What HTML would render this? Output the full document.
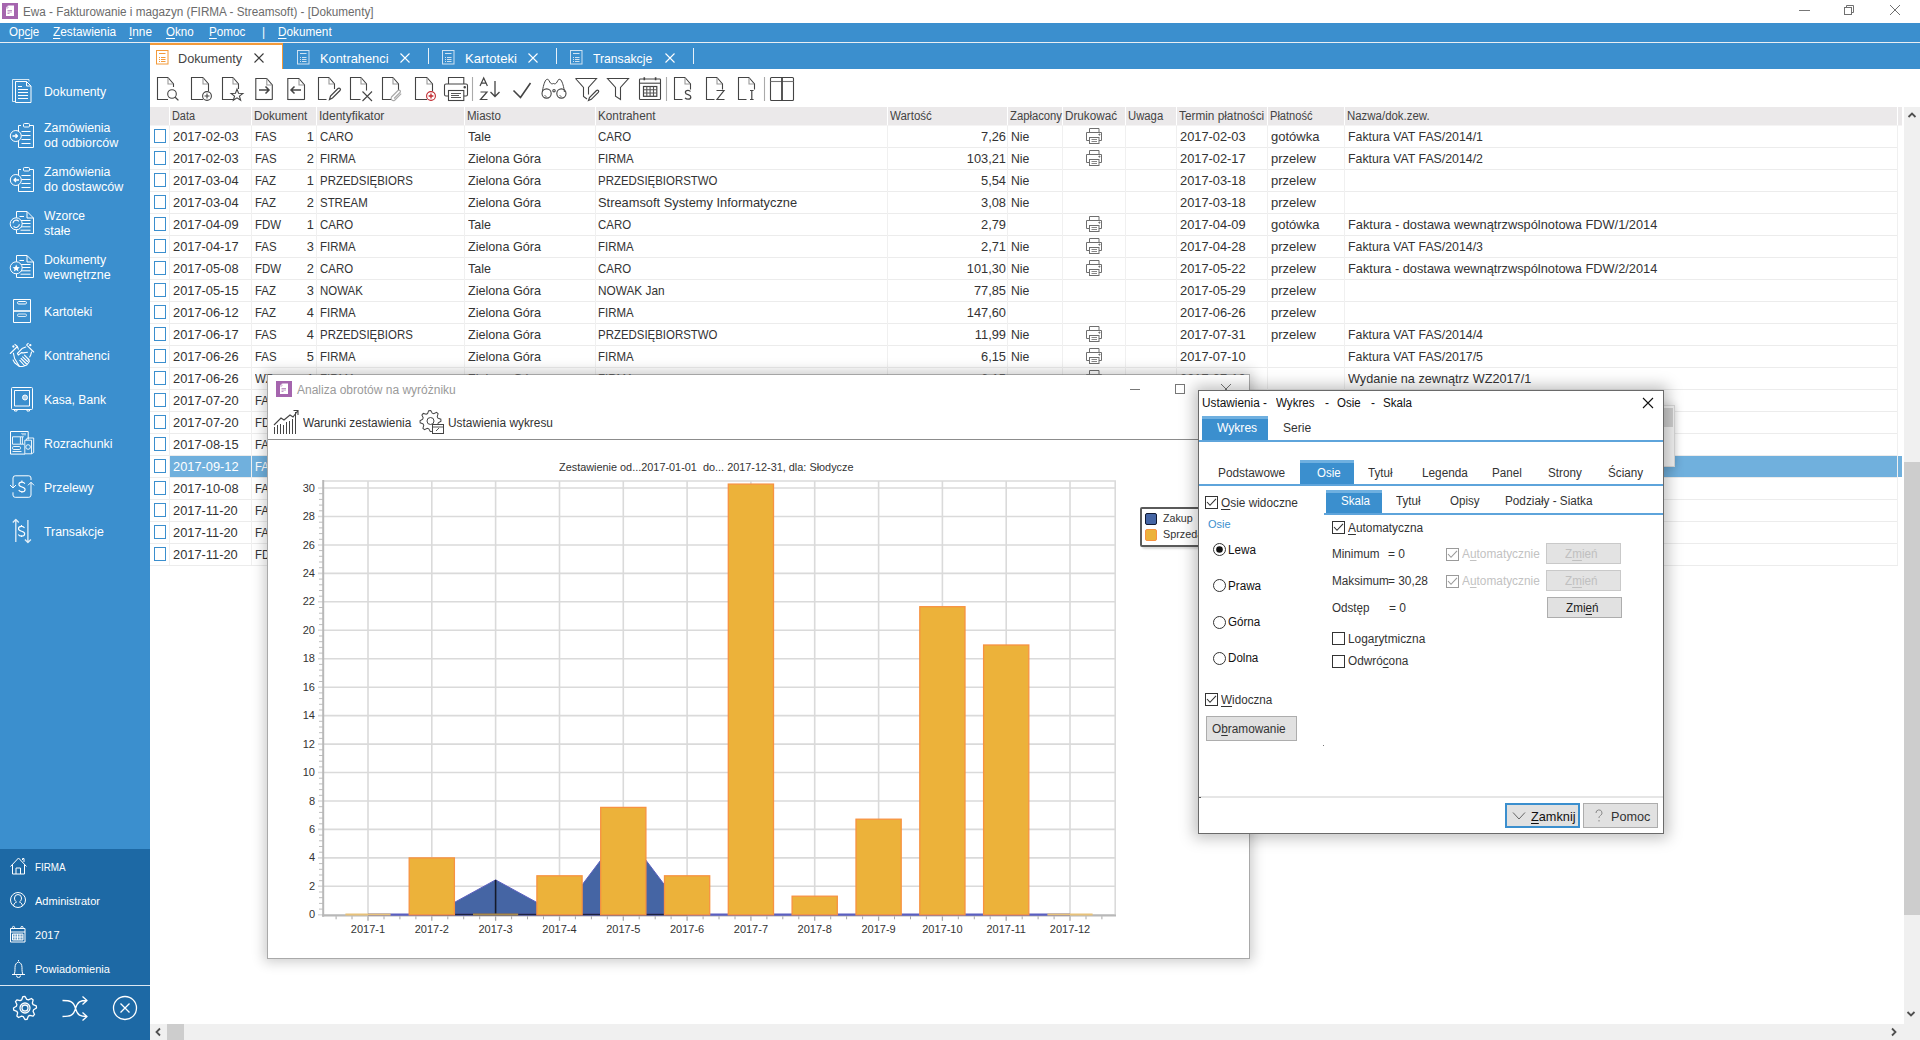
<!DOCTYPE html>
<html><head><meta charset="utf-8"><title>Ewa - Fakturowanie i magazyn</title>
<style>
*{margin:0;padding:0;box-sizing:border-box}
html,body{width:1920px;height:1040px;overflow:hidden;background:#fff;font-family:"Liberation Sans",sans-serif;color:#333;}
.a{position:absolute}
.t{position:absolute;white-space:nowrap;line-height:1}
u{text-decoration:underline;text-decoration-thickness:1px;text-underline-offset:2px}
</style></head><body>

<svg class="a" style="left:2px;top:3px" width="16" height="16" viewBox="0 0 16 16"><rect width="16" height="16" fill="#a565ae"/><path d="M6 2.5h6v10.5h-8v-8.5z" fill="#fff"/><path d="M4 4.5l2-2M4.5 5.3c1 .3 1.8-.5 1.5-1.5" fill="none" stroke="#b27ab9" stroke-width="0.7"/><path d="M5.5 7.5h4.5M5.5 9h4.5M5.5 10.5h2" stroke="#b98ac0" stroke-width="0.9"/></svg>
<div class="t" style="left:23px;top:6px;font-size:12px;color:#6b6b6b;transform:scaleX(0.977);transform-origin:0 0;">Ewa - Fakturowanie i magazyn (FIRMA - Streamsoft) - [Dokumenty]</div>
<div class="a" style="left:1799px;top:10px;width:11px;height:1px;background:#777"></div>
<svg class="a" style="left:1843px;top:4px" width="12" height="12" viewBox="0 0 12 12"><g fill="none" stroke="#707070" stroke-width="1"><rect x="1.5" y="3.5" width="7" height="7"/><path d="M3.5 3.5V1.5h7v7h-2"/></g></svg>
<svg class="a" style="left:1889px;top:4px" width="12" height="12" viewBox="0 0 12 12"><path d="M1 1L11 11M11 1L1 11" stroke="#707070" stroke-width="1"/></svg>
<div class="a" style="left:0px;top:23px;width:1920px;height:19px;background:#3b8fce"></div>
<div class="a" style="left:0px;top:42px;width:1920px;height:1px;background:#e9eef3"></div>
<div class="t" style="left:9px;top:26px;font-size:12px;color:#fff;transform:scaleX(0.964);transform-origin:0 0;">Op<u>c</u>je</div>
<div class="t" style="left:53px;top:26px;font-size:12px;color:#fff;transform:scaleX(0.986);transform-origin:0 0;"><u>Z</u>estawienia</div>
<div class="t" style="left:129px;top:26px;font-size:12px;color:#fff;transform:scaleX(0.983);transform-origin:0 0;"><u>I</u>nne</div>
<div class="t" style="left:166px;top:26px;font-size:12px;color:#fff;transform:scaleX(0.961);transform-origin:0 0;"><u>O</u>kno</div>
<div class="t" style="left:209px;top:26px;font-size:12px;color:#fff;transform:scaleX(0.974);transform-origin:0 0;"><u>P</u>omoc</div>
<div class="t" style="left:262px;top:26px;font-size:12px;color:#fff;">|</div>
<div class="t" style="left:278px;top:26px;font-size:12px;color:#fff;transform:scaleX(0.981);transform-origin:0 0;"><u>D</u>okument</div>
<div class="a" style="left:150px;top:43px;width:1770px;height:26px;background:#3b8fce"></div>
<div class="a" style="left:0px;top:43px;width:150px;height:806px;background:#3b8fce"></div>
<div class="a" style="left:0px;top:849px;width:150px;height:191px;background:#1d69a5"></div>
<div class="a" style="left:0px;top:985px;width:150px;height:1px;background:#dce8f2"></div>
<svg class="a" style="left:0;top:0" width="150" height="1040" viewBox="0 0 150 1040"><g fill="none" stroke="#fff" stroke-width="1" stroke-linejoin="round"><path d="M15 101.5h-2.5v-22h16.5v2" stroke-opacity="0.8"/><path d="M15.5 81.5h11l4.5 4.5v16.5h-15.5z"/><path d="M26.5 81.5v4.5h4.5"/><path d="M18 86.5h4M18 89.5h10M18 92.5h10M18 95.5h10M18 98.5h10" stroke-width="1.2"/><path d="M21 125.5h-2.5v22h15v-22h-3.5"/><rect x="23.5" y="123.5" width="6" height="3.5" rx="1"/><path d="M21.5 131.5h9"/><path d="M21.5 135.5h9"/><path d="M21.5 139.5h9"/><path d="M21.5 143.5h9"/><circle cx="15.8" cy="136" r="5.5" fill="#3b8fce"/><path d="M12.5 136h5M15.5 134l2 2l-2 2" stroke-width="1.3"/><path d="M21 169.5h-2.5v22h15v-22h-3.5"/><rect x="23.5" y="167.5" width="6" height="3.5" rx="1"/><path d="M21.5 175.5h9"/><path d="M21.5 179.5h9"/><path d="M21.5 183.5h9"/><path d="M21.5 187.5h9"/><circle cx="15.8" cy="180" r="5.5" fill="#3b8fce"/><path d="M19 180h-5M16 178l-2 2l2 2" stroke-width="1.3"/><path d="M16.5 233.5v-22h10.5l6.5 6.5v15.5z"/><path d="M27 211.5v6.5h6.5"/><path d="M19.5 216.5h4.5M20.5 220.5h10M20.5 223.5h10M20.5 226.8h10M20.5 230.2h10"/><circle cx="16.2" cy="223.8" r="6" fill="#3b8fce"/><path d="M13 223.3 a3.3 3.3 0 0 1 5.8 -2M19.4 224.3 a3.3 3.3 0 0 1 -5.8 2" stroke-width="1.1"/><path d="M16.5 277.5v-22h10.5l6.5 6.5v15.5z"/><path d="M27 255.5v6.5h6.5"/><path d="M19.5 260.5h4.5M20.5 264.5h10M20.5 267.5h10M20.5 270.8h10M20.5 274.2h10"/><circle cx="16.2" cy="267.8" r="6" fill="#3b8fce"/><path d="M16.2 264.6l1.1 2.3l2.5 .3l-1.9 1.7l.6 2.5l-2.3-1.3l-2.3 1.3l.6-2.5l-1.9-1.7l2.5-.3z" fill="#fff" stroke="none"/><rect x="13.5" y="299.5" width="17" height="23" /><path d="M13.5 310.5h17M13.5 311.5h17" stroke-opacity="0.8"/><rect x="17.5" y="301.5" width="9" height="2.5" rx="1.2"/><rect x="17.5" y="314" width="9" height="2.5" rx="1.2" stroke-opacity="0.8"/><g stroke-width="1.1" stroke-linecap="round"><path d="M10.3 353.5l7.1-7M14.9 344.3l2.5 2.2l.9 2.7M27.5 345.8l6.2 6.2M28.2 343.4c-1 .5-1.5 1-1.6 1.8"/><circle cx="13.4" cy="346.5" r="0.6" fill="#fff"/><circle cx="30.3" cy="345.2" r="0.6" fill="#fff"/><path d="M25.7 347.1l-3.7 1.5l-4.6 4.9l.9 1.6l3.1-2.5l1.8.3l4.3-.6"/><path d="M13.4 353.2l1.2 5.3l4.9 8h3.1l4.2-1.5l2.5-3.5l-1-2.5"/><path d="M31.5 352l-.8 3l-1 1.9"/><path d="M24.5 355.1l4.6 4.9M22.6 356.9l4.9 4.6M21.1 358.5l5.5 5.5M19.8 360.3l4.7 5.2"/><path d="M13.1 360l1.5 2.8l4.9 3.7"/></g><rect x="11.5" y="387.5" width="21" height="22" rx="1"/><rect x="14.5" y="390.5" width="15" height="15.5"/><circle cx="25" cy="397.5" r="2.5" fill="#fff" fill-opacity="0.6"/><path d="M14.5 409.5v1.5h2.5v-1.5M27 409.5v1.5h2.5v-1.5"/><path d="M25 454.1h-14.5v-22.6h17.7v8"/><path d="M21 433.7h5M22 434.8h4" stroke-opacity="0.6"/><path d="M12.5 444.2v-7.4h11.3M12.5 444.2h11.5M20.4 437v7M22.4 437v7" stroke-width="0.9"/><rect x="12.5" y="446.5" width="8" height="3" rx="1.2" stroke-width="0.9"/><path d="M12.5 451.5h9" stroke-width="0.9"/><path d="M24.8 453.8v-13.6h6.7v13.6h-6.7M26 440.2l1.3-2.2h6.4v14.5l-2.2 1.3" stroke-width="0.9"/><circle cx="28.1" cy="447" r="2.3" stroke-width="0.9"/><path d="M13 488v-10a2.2 2.2 0 0 1 2.2-2.2h13.6a2.2 2.2 0 0 1 2.2 2.2v2"/><path d="M31 482.3v12.8a2.2 2.2 0 0 1 -2.2 2.2h-13.6a2.2 2.2 0 0 1 -2.2-2.2v-2.8"/><path d="M10 485l3 3l3-3M28 485.3l3-3l3 3"/><path d="M24.9 483.7c-.6-1-1.7-1.6-3-1.6c-1.8 0-3 1-3 2.3c0 3 6.2 2 6.2 5c0 1.4-1.3 2.4-3.2 2.4c-1.4 0-2.6-.6-3.2-1.7" stroke-width="1.1"/><path d="M21.9 480.6v1.5M21.9 491.3v1.5" stroke-width="1.1"/><path d="M15.8 542v-22.5M12.8 522.5l3-3l3 3M27.9 520v22.5M24.9 539.5l3 3l3-3" stroke-width="1.3" stroke-opacity="0.85"/><path d="M24.5 528.0c-.6-1-1.7-1.6-3-1.6c-1.8 0-3 1-3 2.3c0 3 6.2 2 6.2 5c0 1.4-1.3 2.4-3.2 2.4c-1.4 0-2.6-.6-3.2-1.7" stroke-width="1.1"/><path d="M21.5 524.9v1.5M21.5 535.6v1.5" stroke-width="1.1"/><path d="M10.5 866.5l8-8.5l8 8.5M12.5 864.5v9.5h12v-9.5M16 874v-6h4.5v6M22.5 860v-1.5h1.5v3.5"/><circle cx="18" cy="900" r="7.5"/><path d="M13.5 906c.5-3 2-3.5 3-4c-1.5-1-2-2.5-2-4a3.5 3.5 0 0 1 7 0c0 1.5-.5 3-2 4c1 .5 2.5 1 3 4"/><rect x="10.5" y="928.5" width="14.5" height="13.5"/><path d="M10.5 932h14.5"/><circle cx="13.5" cy="927.5" r="1.1"/><circle cx="22" cy="927.5" r="1.1"/><rect x="12.5" y="934" width="10.5" height="6" fill="#fff" fill-opacity="0.35"/><path d="M12.5 937h10.5M15 934v6M17.5 934v6M20 934v6" stroke-opacity="0.9"/><path d="M12 974.5h13M14 974.5c1-2 1-4 1-7c0-3 1.5-5 3.5-5.5c2 .5 3.5 2.5 3.5 5.5c0 3 0 5 1 7M16.5 975.5a2 2 0 0 0 4 0M18.5 961v-1"/><g transform="translate(25 1008)"><polygon points="11.50,0.00 11.28,2.24 8.13,3.37 7.32,4.89 8.13,8.13 6.39,9.56 3.37,8.13 1.72,8.63 0.00,11.50 -2.24,11.28 -3.37,8.13 -4.89,7.32 -8.13,8.13 -9.56,6.39 -8.13,3.37 -8.63,1.72 -11.50,0.00 -11.28,-2.24 -8.13,-3.37 -7.32,-4.89 -8.13,-8.13 -6.39,-9.56 -3.37,-8.13 -1.72,-8.63 -0.00,-11.50 2.24,-11.28 3.37,-8.13 4.89,-7.32 8.13,-8.13 9.56,-6.39 8.13,-3.37 8.63,-1.72" transform="rotate(-11)" stroke-width="1.3"/><circle r="5" stroke-width="1.3"/><circle r="3" stroke-width="1.3"/></g><path d="M62.5 1000.5c8 0 11 1 13 8s5 8 11 8M62.5 1016.5c8 0 11-1 13-8s5-8 11-8M82.5 996.5l4.5 4l-4.5 4M82.5 1012.5l4.5 4l-4.5 4" stroke-width="1.3"/><circle cx="125" cy="1008" r="11.5" stroke-width="1.3"/><path d="M120.5 1003.5l9 9M129.5 1003.5l-9 9" stroke-width="1.3"/></g></svg>
<div class="t" style="left:44px;top:86px;font-size:12.5px;color:#fff;transform:scaleX(0.983);transform-origin:0 0;">Dokumenty</div>
<div class="t" style="left:44px;top:122px;font-size:12.5px;color:#fff;transform:scaleX(0.986);transform-origin:0 0;">Zamówienia</div>
<div class="t" style="left:44px;top:137px;font-size:12.5px;color:#fff;">od odbiorców</div>
<div class="t" style="left:44px;top:166px;font-size:12.5px;color:#fff;transform:scaleX(0.986);transform-origin:0 0;">Zamówienia</div>
<div class="t" style="left:44px;top:181px;font-size:12.5px;color:#fff;">do dostawców</div>
<div class="t" style="left:44px;top:210px;font-size:12.5px;color:#fff;transform:scaleX(0.967);transform-origin:0 0;">Wzorce</div>
<div class="t" style="left:44px;top:225px;font-size:12.5px;color:#fff;">stałe</div>
<div class="t" style="left:44px;top:254px;font-size:12.5px;color:#fff;transform:scaleX(0.983);transform-origin:0 0;">Dokumenty</div>
<div class="t" style="left:44px;top:269px;font-size:12.5px;color:#fff;">wewnętrzne</div>
<div class="t" style="left:44px;top:306px;font-size:12.5px;color:#fff;transform:scaleX(0.980);transform-origin:0 0;">Kartoteki</div>
<div class="t" style="left:44px;top:350px;font-size:12.5px;color:#fff;transform:scaleX(0.985);transform-origin:0 0;">Kontrahenci</div>
<div class="t" style="left:44px;top:394px;font-size:12.5px;color:#fff;transform:scaleX(0.969);transform-origin:0 0;">Kasa, Bank</div>
<div class="t" style="left:44px;top:438px;font-size:12.5px;color:#fff;transform:scaleX(0.984);transform-origin:0 0;">Rozrachunki</div>
<div class="t" style="left:44px;top:482px;font-size:12.5px;color:#fff;transform:scaleX(0.980);transform-origin:0 0;">Przelewy</div>
<div class="t" style="left:44px;top:526px;font-size:12.5px;color:#fff;transform:scaleX(0.985);transform-origin:0 0;">Transakcje</div>
<div class="t" style="left:35px;top:862px;font-size:11.2px;color:#fff;transform:scaleX(0.880);transform-origin:0 0;">FIRMA</div>
<div class="t" style="left:35px;top:896px;font-size:11.2px;color:#fff;transform:scaleX(0.986);transform-origin:0 0;">Administrator</div>
<div class="t" style="left:35px;top:930px;font-size:11.2px;color:#fff;transform:scaleX(0.985);transform-origin:0 0;">2017</div>
<div class="t" style="left:35px;top:964px;font-size:11.2px;color:#fff;transform:scaleX(0.988);transform-origin:0 0;">Powiadomienia</div>
<div class="a" style="left:150px;top:43px;width:133px;height:26px;background:#fff;border-top:2px solid #f39a3a;border-right:1px solid #f39a3a"></div>
<svg class="a" style="left:156px;top:50px" width="13" height="15" viewBox="0 0 13 15"><g fill="none" stroke="#f39a3a" stroke-width="1"><rect x="0.5" y="0.5" width="11.5" height="13.5"/><path d="M3 3.5h6.5"/><path d="M3 7.5h1M5 7.5h4.5M3 9.5h1M5 9.5h4.5M3 11.5h1M5 11.5h4.5" stroke-width="1"/></g></svg>
<div class="t" style="left:178px;top:52px;font-size:13px;color:#444;transform:scaleX(0.976);transform-origin:0 0;">Dokumenty</div>
<svg class="a" style="left:254px;top:53px" width="10" height="10" viewBox="0 0 10 10"><path d="M0.5 0.5L9.5 9.5M9.5 0.5L0.5 9.5" stroke="#3a3a3a" stroke-width="1.1"/></svg>
<svg class="a" style="left:297px;top:50px" width="13" height="15" viewBox="0 0 13 15"><g fill="none" stroke="#cfe2f2" stroke-width="1"><rect x="0.5" y="0.5" width="11.5" height="13.5"/><path d="M3 3.5h6.5"/><path d="M3 7.5h1M5 7.5h4.5M3 9.5h1M5 9.5h4.5M3 11.5h1M5 11.5h4.5"/></g></svg>
<div class="t" style="left:320px;top:52px;font-size:13px;color:#fff;transform:scaleX(0.987);transform-origin:0 0;">Kontrahenci</div>
<svg class="a" style="left:400px;top:53px" width="10" height="10" viewBox="0 0 10 10"><path d="M0.5 0.5L9.5 9.5M9.5 0.5L0.5 9.5" stroke="#fff" stroke-width="1.1"/></svg>
<div class="a" style="left:428px;top:48px;width:1px;height:16px;background:#e6f0f8"></div>
<svg class="a" style="left:442px;top:50px" width="13" height="15" viewBox="0 0 13 15"><g fill="none" stroke="#cfe2f2" stroke-width="1"><rect x="0.5" y="0.5" width="11.5" height="13.5"/><path d="M3 3.5h6.5"/><path d="M3 7.5h1M5 7.5h4.5M3 9.5h1M5 9.5h4.5M3 11.5h1M5 11.5h4.5"/></g></svg>
<div class="t" style="left:465px;top:52px;font-size:13px;color:#fff;transform:scaleX(1.014);transform-origin:0 0;">Kartoteki</div>
<svg class="a" style="left:528px;top:53px" width="10" height="10" viewBox="0 0 10 10"><path d="M0.5 0.5L9.5 9.5M9.5 0.5L0.5 9.5" stroke="#fff" stroke-width="1.1"/></svg>
<div class="a" style="left:556px;top:48px;width:1px;height:16px;background:#e6f0f8"></div>
<svg class="a" style="left:570px;top:50px" width="13" height="15" viewBox="0 0 13 15"><g fill="none" stroke="#cfe2f2" stroke-width="1"><rect x="0.5" y="0.5" width="11.5" height="13.5"/><path d="M3 3.5h6.5"/><path d="M3 7.5h1M5 7.5h4.5M3 9.5h1M5 9.5h4.5M3 11.5h1M5 11.5h4.5"/></g></svg>
<div class="t" style="left:593px;top:52px;font-size:13px;color:#fff;transform:scaleX(0.938);transform-origin:0 0;">Transakcje</div>
<svg class="a" style="left:665px;top:53px" width="10" height="10" viewBox="0 0 10 10"><path d="M0.5 0.5L9.5 9.5M9.5 0.5L0.5 9.5" stroke="#fff" stroke-width="1.1"/></svg>
<div class="a" style="left:693px;top:48px;width:1px;height:16px;background:#e6f0f8"></div>
<svg class="a" style="left:0;top:0" width="820" height="110" viewBox="0 0 820 110"><g fill="none" stroke="#444" stroke-width="1.1" stroke-linejoin="miter"><path d="M168.0 77.5H157.5V99.5H168.0"/><path d="M168.0 77.5L173.5 84.0V87.0"/><path d="M168.0 78.0V84.0H173.0" stroke="#999"/><circle cx="172" cy="94" r="4.3"/><path d="M175.2 97.2l3.2 3.2" stroke-width="1.3"/><path d="M203.0 77.5H191.5V99.5H203.0"/><path d="M203.0 77.5L208.5 84.0V91.0"/><path d="M203.0 78.0V84.0H208.0" stroke="#999"/><circle cx="207" cy="96" r="4.4"/><path d="M204.5 96h5M207 93.5v5"/><path d="M233.0 77.5H222.5V99.5H233.0"/><path d="M233.0 77.5L238.5 84.0V89.0"/><path d="M233.0 78.0V84.0H238.0" stroke="#999"/><polygon points="237.00,89.10 238.53,93.20 242.90,93.38 239.47,96.10 240.64,100.32 237.00,97.90 233.36,100.32 234.53,96.10 231.10,93.38 235.47,93.20"/><path d="M266.8 78.5H255.8V99.5H272.3"/><path d="M266.8 78.5L272.3 85.0V99.5"/><path d="M272.3 99.5H255.8"/><path d="M266.8 79.0V85.0H271.8" stroke="#999"/><path d="M259 90h10M265.5 86.5l3.5 3.5l-3.5 3.5" stroke-width="1.5"/><path d="M299.0 78.5H287.8V99.5H304.5"/><path d="M299.0 78.5L304.5 85.0V99.5"/><path d="M304.5 99.5H287.8"/><path d="M299.0 79.0V85.0H304.0" stroke="#999"/><path d="M301 90h-10M294.5 86.5l-3.5 3.5l3.5 3.5" stroke-width="1.5"/><path d="M329.0 77.5H318.5V99.5H326.5"/><path d="M329.0 77.5L334.5 84.0V89.0"/><path d="M329.0 78.0V84.0H334.0" stroke="#999"/><path d="M329.5 99.5l1-3.5l7.5-7.5a1.2 1.2 0 0 1 2 2l-7.5 7.5z" stroke-width="1.2"/><path d="M361.0 77.5H350.5V99.5H360.5"/><path d="M361.0 77.5L366.5 84.0V90.5"/><path d="M361.0 78.0V84.0H366.0" stroke="#999"/><path d="M362.5 91.5l9.5 9.5M372 91.5l-9.5 9.5"/><path d="M393.0 77.5H382.5V99.5H392.0"/><path d="M393.0 77.5L398.5 84.0V90.0"/><path d="M393.0 78.0V84.0H398.0" stroke="#999"/><path d="M394 98.5l6-6a1.4 1.4 0 0 0 -2-2l-6.5 6.5a2.3 2.3 0 0 0 3.2 3.2l6.5-6.5" stroke="#aaa" stroke-width="1.2"/><path d="M427.0 77.5H415.5V99.5H427.0"/><path d="M427.0 77.5L432.5 84.0V91.0"/><path d="M427.0 78.0V84.0H432.0" stroke="#999"/><circle cx="431" cy="96" r="4.4" fill="#fff" stroke="#c0282e" stroke-width="1.1"/><path d="M428.6 96h4.8M431 93.6v4.8" stroke="#c0282e" stroke-width="1.3"/><path d="M448.5 84V77.5h15.3V84"/><rect x="444.5" y="84" width="23" height="12" rx="1.5"/><rect x="448.5" y="90.5" width="15.3" height="10" fill="#fff"/><path d="M451 93.5h10M451 95.5h8M451 97.5h10" stroke-width="0.9"/><circle cx="464.7" cy="87.2" r="0.7" fill="#444"/><path d="M472.5 77v24M666.5 77v24M764.5 77v24" stroke="#aaa"/><path d="M480 86l3.7-8l3.7 8M481.4 83.2h4.6" stroke-width="1.2"/><path d="M480.5 92h6.5l-6.5 7.5h7" stroke-width="1.2"/><path d="M495 81v15.5M490.5 92l4.5 4.5l4.5-4.5" stroke-width="1.3"/><path d="M513.5 90.5l7 7l10-14.5" stroke-width="1.6"/><circle cx="546.6" cy="93.5" r="4.6"/><circle cx="561.4" cy="93.5" r="4.6"/><path d="M542.4 92c0.5-5 2-10 3.5-12c1-1 2.5-1 3 .5l1.5 2.5c1 1 2 1 3 .5c1 .5 2 .5 3-.5l1.5-2.5c.5-1.5 2-1.5 3-.5c1.5 2 3 7 3.5 12" stroke-width="1"/><circle cx="554" cy="90.7" r="1.2"/><path d="M544.5 95l2 2M559.5 95l2 2" stroke-width="0.8"/><path d="M575.5 78.5h21l-8 9v7M575.5 78.5l8 9v9l3.5 2.5"/><path d="M588.5 100.5l1-3l7-7a1.2 1.2 0 0 1 1.8 1.8l-7 7z" stroke-width="1.2"/><path d="M607.5 78.5h21l-8 9v12l-5-3.3v-8.7z"/><rect x="639.5" y="79" width="21" height="20.5" rx="0.8"/><path d="M639.5 83.2h21"/><path d="M644.3 77.3v3M655.6 77.3v3" stroke-width="1.6"/><rect x="643.5" y="86.5" width="13.3" height="9.8" fill="#fff" stroke="#444" stroke-width="1.2"/><path d="M643.5 89.8h13.3M643.5 93h13.3M646.8 86.5v9.8M650.1 86.5v9.8M653.5 86.5v9.8" stroke="#555" stroke-width="1.1"/><path d="M685.0 77.5H674.5V99.5H682.5"/><path d="M685.0 77.5L690.5 84.0V89.5"/><path d="M685.0 78.0V84.0H690.0" stroke="#999"/><path d="M717.0 77.5H706.5V99.5H714.5"/><path d="M717.0 77.5L722.5 84.0V89.5"/><path d="M717.0 78.0V84.0H722.0" stroke="#999"/><path d="M749.0 77.5H738.5V99.5H746.5"/><path d="M749.0 77.5L754.5 84.0V89.5"/><path d="M749.0 78.0V84.0H754.0" stroke="#999"/><path d="M690.5 91.5c-.5-.8-1.4-1.2-2.5-1.2c-1.5 0-2.6.9-2.6 2.1c0 2.8 5.4 1.8 5.4 4.6c0 1.3-1.1 2.2-2.8 2.2c-1.2 0-2.3-.5-2.9-1.4" stroke-width="1.3"/><path d="M716.5 90.5h7.5l-7 9h7.5" stroke-width="1.2"/><path d="M751.8 90.5v9M750 90.5h3.6M750 99.5h3.6" stroke-width="1.2"/><rect x="770.5" y="77.5" width="23" height="23" rx="1"/><path d="M770.5 81.5h23" stroke="#777"/><path d="M782 77.5v23" stroke-width="1.8"/></g></svg>
<div class="a" style="left:150px;top:107px;width:19px;height:18px;background:#ebe9ea"></div>
<div class="a" style="left:170px;top:107px;width:81px;height:18px;background:#ebe9ea"></div>
<div class="a" style="left:252px;top:107px;width:64px;height:18px;background:#ebe9ea"></div>
<div class="a" style="left:317px;top:107px;width:147px;height:18px;background:#ebe9ea"></div>
<div class="a" style="left:465px;top:107px;width:130px;height:18px;background:#ebe9ea"></div>
<div class="a" style="left:596px;top:107px;width:291px;height:18px;background:#ebe9ea"></div>
<div class="a" style="left:888px;top:107px;width:119px;height:18px;background:#ebe9ea"></div>
<div class="a" style="left:1008px;top:107px;width:54px;height:18px;background:#ebe9ea"></div>
<div class="a" style="left:1063px;top:107px;width:62px;height:18px;background:#ebe9ea"></div>
<div class="a" style="left:1126px;top:107px;width:50px;height:18px;background:#ebe9ea"></div>
<div class="a" style="left:1177px;top:107px;width:90px;height:18px;background:#ebe9ea"></div>
<div class="a" style="left:1268px;top:107px;width:76px;height:18px;background:#ebe9ea"></div>
<div class="a" style="left:1345px;top:107px;width:552px;height:18px;background:#ebe9ea"></div>
<div class="a" style="left:1898px;top:107px;width:4px;height:18px;background:#ebe9ea"></div>
<div class="a" style="left:150px;top:125px;width:1752px;height:1px;background:#f5f4f4"></div>
<div class="t" style="left:172px;top:110px;font-size:12px;color:#444;transform:scaleX(0.907);transform-origin:0 0;">Data</div>
<div class="t" style="left:254px;top:110px;font-size:12px;color:#444;transform:scaleX(0.976);transform-origin:0 0;">Dokument</div>
<div class="t" style="left:319px;top:110px;font-size:12px;color:#444;">Identyfikator</div>
<div class="t" style="left:467px;top:110px;font-size:12px;color:#444;transform:scaleX(0.962);transform-origin:0 0;">Miasto</div>
<div class="t" style="left:598px;top:110px;font-size:12px;color:#444;transform:scaleX(0.979);transform-origin:0 0;">Kontrahent</div>
<div class="t" style="left:890px;top:110px;font-size:12px;color:#444;transform:scaleX(0.960);transform-origin:0 0;">Wartość</div>
<div class="t" style="left:1010px;top:110px;font-size:12px;color:#444;transform:scaleX(0.939);transform-origin:0 0;">Zapłacony</div>
<div class="t" style="left:1065px;top:110px;font-size:12px;color:#444;transform:scaleX(0.975);transform-origin:0 0;">Drukować</div>
<div class="t" style="left:1128px;top:110px;font-size:12px;color:#444;transform:scaleX(0.942);transform-origin:0 0;">Uwaga</div>
<div class="t" style="left:1179px;top:110px;font-size:12px;color:#444;transform:scaleX(0.983);transform-origin:0 0;">Termin płatności</div>
<div class="t" style="left:1270px;top:110px;font-size:12px;color:#444;transform:scaleX(0.923);transform-origin:0 0;">Płatność</div>
<div class="t" style="left:1347px;top:110px;font-size:12px;color:#444;transform:scaleX(0.953);transform-origin:0 0;">Nazwa/dok.zew.</div>
<div class="a" style="left:150px;top:147px;width:1748px;height:1px;background:#ececec"></div>
<div class="a" style="left:154px;top:129px;width:12px;height:14px;border:1px solid #3b8fce;background:#fff"></div>
<div class="t" style="left:173px;top:130px;font-size:13px;color:#333333;transform:scaleX(0.987);transform-origin:0 0;">2017-02-03</div>
<div class="t" style="left:255px;top:130px;font-size:13px;color:#333333;transform:scaleX(0.880);transform-origin:0 0;">FAS</div>
<div class="t" style="left:214px;width:100px;text-align:right;top:130px;font-size:13px;color:#333333;transform:scaleX(0.985);transform-origin:100% 0;">1</div>
<div class="t" style="left:320px;top:130px;font-size:13px;color:#333333;transform:scaleX(0.880);transform-origin:0 0;">CARO</div>
<div class="t" style="left:468px;top:130px;font-size:13px;color:#333333;transform:scaleX(0.962);transform-origin:0 0;">Tale</div>
<div class="t" style="left:598px;top:130px;font-size:13px;color:#333333;transform:scaleX(0.880);transform-origin:0 0;">CARO</div>
<div class="t" style="left:906px;width:100px;text-align:right;top:130px;font-size:13px;color:#333333;transform:scaleX(0.987);transform-origin:100% 0;">7,26</div>
<div class="t" style="left:1011px;top:130px;font-size:13px;color:#333333;transform:scaleX(0.942);transform-origin:0 0;">Nie</div>
<div class="a" style="left:1085px;top:128px"><svg width="18" height="17" viewBox="0 0 18 17"><g fill="none" stroke="#6f6f6f" stroke-width="1"><path d="M4.5 4.5V0.5h9.5v4"/><path d="M4 12.5H1.5v-8h15v8H14"/><rect x="4.5" y="9.5" width="9.5" height="6" fill="#fff"/><path d="M6.5 11.5h5.5M6.5 13.5h5.5" stroke="#888"/><circle cx="14.4" cy="6.6" r="0.6" fill="#6f6f6f"/></g></svg></div>
<div class="t" style="left:1180px;top:130px;font-size:13px;color:#333333;transform:scaleX(0.987);transform-origin:0 0;">2017-02-03</div>
<div class="t" style="left:1271px;top:130px;font-size:13px;color:#333333;">gotówka</div>
<div class="t" style="left:1348px;top:130px;font-size:13px;color:#333333;transform:scaleX(0.948);transform-origin:0 0;">Faktura VAT FAS/2014/1</div>
<div class="a" style="left:150px;top:169px;width:1748px;height:1px;background:#ececec"></div>
<div class="a" style="left:154px;top:151px;width:12px;height:14px;border:1px solid #3b8fce;background:#fff"></div>
<div class="t" style="left:173px;top:152px;font-size:13px;color:#333333;transform:scaleX(0.987);transform-origin:0 0;">2017-02-03</div>
<div class="t" style="left:255px;top:152px;font-size:13px;color:#333333;transform:scaleX(0.880);transform-origin:0 0;">FAS</div>
<div class="t" style="left:214px;width:100px;text-align:right;top:152px;font-size:13px;color:#333333;transform:scaleX(0.985);transform-origin:100% 0;">2</div>
<div class="t" style="left:320px;top:152px;font-size:13px;color:#333333;transform:scaleX(0.880);transform-origin:0 0;">FIRMA</div>
<div class="t" style="left:468px;top:152px;font-size:13px;color:#333333;transform:scaleX(0.971);transform-origin:0 0;">Zielona Góra</div>
<div class="t" style="left:598px;top:152px;font-size:13px;color:#333333;transform:scaleX(0.880);transform-origin:0 0;">FIRMA</div>
<div class="t" style="left:906px;width:100px;text-align:right;top:152px;font-size:13px;color:#333333;transform:scaleX(0.986);transform-origin:100% 0;">103,21</div>
<div class="t" style="left:1011px;top:152px;font-size:13px;color:#333333;transform:scaleX(0.942);transform-origin:0 0;">Nie</div>
<div class="a" style="left:1085px;top:150px"><svg width="18" height="17" viewBox="0 0 18 17"><g fill="none" stroke="#6f6f6f" stroke-width="1"><path d="M4.5 4.5V0.5h9.5v4"/><path d="M4 12.5H1.5v-8h15v8H14"/><rect x="4.5" y="9.5" width="9.5" height="6" fill="#fff"/><path d="M6.5 11.5h5.5M6.5 13.5h5.5" stroke="#888"/><circle cx="14.4" cy="6.6" r="0.6" fill="#6f6f6f"/></g></svg></div>
<div class="t" style="left:1180px;top:152px;font-size:13px;color:#333333;transform:scaleX(0.987);transform-origin:0 0;">2017-02-17</div>
<div class="t" style="left:1271px;top:152px;font-size:13px;color:#333333;">przelew</div>
<div class="t" style="left:1348px;top:152px;font-size:13px;color:#333333;transform:scaleX(0.948);transform-origin:0 0;">Faktura VAT FAS/2014/2</div>
<div class="a" style="left:150px;top:191px;width:1748px;height:1px;background:#ececec"></div>
<div class="a" style="left:154px;top:173px;width:12px;height:14px;border:1px solid #3b8fce;background:#fff"></div>
<div class="t" style="left:173px;top:174px;font-size:13px;color:#333333;transform:scaleX(0.987);transform-origin:0 0;">2017-03-04</div>
<div class="t" style="left:255px;top:174px;font-size:13px;color:#333333;transform:scaleX(0.880);transform-origin:0 0;">FAZ</div>
<div class="t" style="left:214px;width:100px;text-align:right;top:174px;font-size:13px;color:#333333;transform:scaleX(0.985);transform-origin:100% 0;">1</div>
<div class="t" style="left:320px;top:174px;font-size:13px;color:#333333;transform:scaleX(0.880);transform-origin:0 0;">PRZEDSIĘBIORS</div>
<div class="t" style="left:468px;top:174px;font-size:13px;color:#333333;transform:scaleX(0.971);transform-origin:0 0;">Zielona Góra</div>
<div class="t" style="left:598px;top:174px;font-size:13px;color:#333333;transform:scaleX(0.880);transform-origin:0 0;">PRZEDSIĘBIORSTWO</div>
<div class="t" style="left:906px;width:100px;text-align:right;top:174px;font-size:13px;color:#333333;transform:scaleX(0.987);transform-origin:100% 0;">5,54</div>
<div class="t" style="left:1011px;top:174px;font-size:13px;color:#333333;transform:scaleX(0.942);transform-origin:0 0;">Nie</div>
<div class="t" style="left:1180px;top:174px;font-size:13px;color:#333333;transform:scaleX(0.987);transform-origin:0 0;">2017-03-18</div>
<div class="t" style="left:1271px;top:174px;font-size:13px;color:#333333;">przelew</div>
<div class="a" style="left:150px;top:213px;width:1748px;height:1px;background:#ececec"></div>
<div class="a" style="left:154px;top:195px;width:12px;height:14px;border:1px solid #3b8fce;background:#fff"></div>
<div class="t" style="left:173px;top:196px;font-size:13px;color:#333333;transform:scaleX(0.987);transform-origin:0 0;">2017-03-04</div>
<div class="t" style="left:255px;top:196px;font-size:13px;color:#333333;transform:scaleX(0.880);transform-origin:0 0;">FAZ</div>
<div class="t" style="left:214px;width:100px;text-align:right;top:196px;font-size:13px;color:#333333;transform:scaleX(0.985);transform-origin:100% 0;">2</div>
<div class="t" style="left:320px;top:196px;font-size:13px;color:#333333;transform:scaleX(0.880);transform-origin:0 0;">STREAM</div>
<div class="t" style="left:468px;top:196px;font-size:13px;color:#333333;transform:scaleX(0.971);transform-origin:0 0;">Zielona Góra</div>
<div class="t" style="left:598px;top:196px;font-size:13px;color:#333333;transform:scaleX(0.988);transform-origin:0 0;">Streamsoft Systemy Informatyczne</div>
<div class="t" style="left:906px;width:100px;text-align:right;top:196px;font-size:13px;color:#333333;transform:scaleX(0.987);transform-origin:100% 0;">3,08</div>
<div class="t" style="left:1011px;top:196px;font-size:13px;color:#333333;transform:scaleX(0.942);transform-origin:0 0;">Nie</div>
<div class="t" style="left:1180px;top:196px;font-size:13px;color:#333333;transform:scaleX(0.987);transform-origin:0 0;">2017-03-18</div>
<div class="t" style="left:1271px;top:196px;font-size:13px;color:#333333;">przelew</div>
<div class="a" style="left:150px;top:235px;width:1748px;height:1px;background:#ececec"></div>
<div class="a" style="left:154px;top:217px;width:12px;height:14px;border:1px solid #3b8fce;background:#fff"></div>
<div class="t" style="left:173px;top:218px;font-size:13px;color:#333333;transform:scaleX(0.987);transform-origin:0 0;">2017-04-09</div>
<div class="t" style="left:255px;top:218px;font-size:13px;color:#333333;transform:scaleX(0.880);transform-origin:0 0;">FDW</div>
<div class="t" style="left:214px;width:100px;text-align:right;top:218px;font-size:13px;color:#333333;transform:scaleX(0.985);transform-origin:100% 0;">1</div>
<div class="t" style="left:320px;top:218px;font-size:13px;color:#333333;transform:scaleX(0.880);transform-origin:0 0;">CARO</div>
<div class="t" style="left:468px;top:218px;font-size:13px;color:#333333;transform:scaleX(0.962);transform-origin:0 0;">Tale</div>
<div class="t" style="left:598px;top:218px;font-size:13px;color:#333333;transform:scaleX(0.880);transform-origin:0 0;">CARO</div>
<div class="t" style="left:906px;width:100px;text-align:right;top:218px;font-size:13px;color:#333333;transform:scaleX(0.987);transform-origin:100% 0;">2,79</div>
<div class="a" style="left:1085px;top:216px"><svg width="18" height="17" viewBox="0 0 18 17"><g fill="none" stroke="#6f6f6f" stroke-width="1"><path d="M4.5 4.5V0.5h9.5v4"/><path d="M4 12.5H1.5v-8h15v8H14"/><rect x="4.5" y="9.5" width="9.5" height="6" fill="#fff"/><path d="M6.5 11.5h5.5M6.5 13.5h5.5" stroke="#888"/><circle cx="14.4" cy="6.6" r="0.6" fill="#6f6f6f"/></g></svg></div>
<div class="t" style="left:1180px;top:218px;font-size:13px;color:#333333;transform:scaleX(0.987);transform-origin:0 0;">2017-04-09</div>
<div class="t" style="left:1271px;top:218px;font-size:13px;color:#333333;">gotówka</div>
<div class="t" style="left:1348px;top:218px;font-size:13px;color:#333333;transform:scaleX(0.984);transform-origin:0 0;">Faktura - dostawa wewnątrzwspólnotowa FDW/1/2014</div>
<div class="a" style="left:150px;top:257px;width:1748px;height:1px;background:#ececec"></div>
<div class="a" style="left:154px;top:239px;width:12px;height:14px;border:1px solid #3b8fce;background:#fff"></div>
<div class="t" style="left:173px;top:240px;font-size:13px;color:#333333;transform:scaleX(0.987);transform-origin:0 0;">2017-04-17</div>
<div class="t" style="left:255px;top:240px;font-size:13px;color:#333333;transform:scaleX(0.880);transform-origin:0 0;">FAS</div>
<div class="t" style="left:214px;width:100px;text-align:right;top:240px;font-size:13px;color:#333333;transform:scaleX(0.985);transform-origin:100% 0;">3</div>
<div class="t" style="left:320px;top:240px;font-size:13px;color:#333333;transform:scaleX(0.880);transform-origin:0 0;">FIRMA</div>
<div class="t" style="left:468px;top:240px;font-size:13px;color:#333333;transform:scaleX(0.971);transform-origin:0 0;">Zielona Góra</div>
<div class="t" style="left:598px;top:240px;font-size:13px;color:#333333;transform:scaleX(0.880);transform-origin:0 0;">FIRMA</div>
<div class="t" style="left:906px;width:100px;text-align:right;top:240px;font-size:13px;color:#333333;transform:scaleX(0.987);transform-origin:100% 0;">2,71</div>
<div class="t" style="left:1011px;top:240px;font-size:13px;color:#333333;transform:scaleX(0.942);transform-origin:0 0;">Nie</div>
<div class="a" style="left:1085px;top:238px"><svg width="18" height="17" viewBox="0 0 18 17"><g fill="none" stroke="#6f6f6f" stroke-width="1"><path d="M4.5 4.5V0.5h9.5v4"/><path d="M4 12.5H1.5v-8h15v8H14"/><rect x="4.5" y="9.5" width="9.5" height="6" fill="#fff"/><path d="M6.5 11.5h5.5M6.5 13.5h5.5" stroke="#888"/><circle cx="14.4" cy="6.6" r="0.6" fill="#6f6f6f"/></g></svg></div>
<div class="t" style="left:1180px;top:240px;font-size:13px;color:#333333;transform:scaleX(0.987);transform-origin:0 0;">2017-04-28</div>
<div class="t" style="left:1271px;top:240px;font-size:13px;color:#333333;">przelew</div>
<div class="t" style="left:1348px;top:240px;font-size:13px;color:#333333;transform:scaleX(0.948);transform-origin:0 0;">Faktura VAT FAS/2014/3</div>
<div class="a" style="left:150px;top:279px;width:1748px;height:1px;background:#ececec"></div>
<div class="a" style="left:154px;top:261px;width:12px;height:14px;border:1px solid #3b8fce;background:#fff"></div>
<div class="t" style="left:173px;top:262px;font-size:13px;color:#333333;transform:scaleX(0.987);transform-origin:0 0;">2017-05-08</div>
<div class="t" style="left:255px;top:262px;font-size:13px;color:#333333;transform:scaleX(0.880);transform-origin:0 0;">FDW</div>
<div class="t" style="left:214px;width:100px;text-align:right;top:262px;font-size:13px;color:#333333;transform:scaleX(0.985);transform-origin:100% 0;">2</div>
<div class="t" style="left:320px;top:262px;font-size:13px;color:#333333;transform:scaleX(0.880);transform-origin:0 0;">CARO</div>
<div class="t" style="left:468px;top:262px;font-size:13px;color:#333333;transform:scaleX(0.962);transform-origin:0 0;">Tale</div>
<div class="t" style="left:598px;top:262px;font-size:13px;color:#333333;transform:scaleX(0.880);transform-origin:0 0;">CARO</div>
<div class="t" style="left:906px;width:100px;text-align:right;top:262px;font-size:13px;color:#333333;transform:scaleX(0.986);transform-origin:100% 0;">101,30</div>
<div class="t" style="left:1011px;top:262px;font-size:13px;color:#333333;transform:scaleX(0.942);transform-origin:0 0;">Nie</div>
<div class="a" style="left:1085px;top:260px"><svg width="18" height="17" viewBox="0 0 18 17"><g fill="none" stroke="#6f6f6f" stroke-width="1"><path d="M4.5 4.5V0.5h9.5v4"/><path d="M4 12.5H1.5v-8h15v8H14"/><rect x="4.5" y="9.5" width="9.5" height="6" fill="#fff"/><path d="M6.5 11.5h5.5M6.5 13.5h5.5" stroke="#888"/><circle cx="14.4" cy="6.6" r="0.6" fill="#6f6f6f"/></g></svg></div>
<div class="t" style="left:1180px;top:262px;font-size:13px;color:#333333;transform:scaleX(0.987);transform-origin:0 0;">2017-05-22</div>
<div class="t" style="left:1271px;top:262px;font-size:13px;color:#333333;">przelew</div>
<div class="t" style="left:1348px;top:262px;font-size:13px;color:#333333;transform:scaleX(0.984);transform-origin:0 0;">Faktura - dostawa wewnątrzwspólnotowa FDW/2/2014</div>
<div class="a" style="left:150px;top:301px;width:1748px;height:1px;background:#ececec"></div>
<div class="a" style="left:154px;top:283px;width:12px;height:14px;border:1px solid #3b8fce;background:#fff"></div>
<div class="t" style="left:173px;top:284px;font-size:13px;color:#333333;transform:scaleX(0.987);transform-origin:0 0;">2017-05-15</div>
<div class="t" style="left:255px;top:284px;font-size:13px;color:#333333;transform:scaleX(0.880);transform-origin:0 0;">FAZ</div>
<div class="t" style="left:214px;width:100px;text-align:right;top:284px;font-size:13px;color:#333333;transform:scaleX(0.985);transform-origin:100% 0;">3</div>
<div class="t" style="left:320px;top:284px;font-size:13px;color:#333333;transform:scaleX(0.880);transform-origin:0 0;">NOWAK</div>
<div class="t" style="left:468px;top:284px;font-size:13px;color:#333333;transform:scaleX(0.971);transform-origin:0 0;">Zielona Góra</div>
<div class="t" style="left:598px;top:284px;font-size:13px;color:#333333;transform:scaleX(0.909);transform-origin:0 0;">NOWAK Jan</div>
<div class="t" style="left:906px;width:100px;text-align:right;top:284px;font-size:13px;color:#333333;transform:scaleX(0.987);transform-origin:100% 0;">77,85</div>
<div class="t" style="left:1011px;top:284px;font-size:13px;color:#333333;transform:scaleX(0.942);transform-origin:0 0;">Nie</div>
<div class="t" style="left:1180px;top:284px;font-size:13px;color:#333333;transform:scaleX(0.987);transform-origin:0 0;">2017-05-29</div>
<div class="t" style="left:1271px;top:284px;font-size:13px;color:#333333;">przelew</div>
<div class="a" style="left:150px;top:323px;width:1748px;height:1px;background:#ececec"></div>
<div class="a" style="left:154px;top:305px;width:12px;height:14px;border:1px solid #3b8fce;background:#fff"></div>
<div class="t" style="left:173px;top:306px;font-size:13px;color:#333333;transform:scaleX(0.987);transform-origin:0 0;">2017-06-12</div>
<div class="t" style="left:255px;top:306px;font-size:13px;color:#333333;transform:scaleX(0.880);transform-origin:0 0;">FAZ</div>
<div class="t" style="left:214px;width:100px;text-align:right;top:306px;font-size:13px;color:#333333;transform:scaleX(0.985);transform-origin:100% 0;">4</div>
<div class="t" style="left:320px;top:306px;font-size:13px;color:#333333;transform:scaleX(0.880);transform-origin:0 0;">FIRMA</div>
<div class="t" style="left:468px;top:306px;font-size:13px;color:#333333;transform:scaleX(0.971);transform-origin:0 0;">Zielona Góra</div>
<div class="t" style="left:598px;top:306px;font-size:13px;color:#333333;transform:scaleX(0.880);transform-origin:0 0;">FIRMA</div>
<div class="t" style="left:906px;width:100px;text-align:right;top:306px;font-size:13px;color:#333333;transform:scaleX(0.986);transform-origin:100% 0;">147,60</div>
<div class="t" style="left:1180px;top:306px;font-size:13px;color:#333333;transform:scaleX(0.987);transform-origin:0 0;">2017-06-26</div>
<div class="t" style="left:1271px;top:306px;font-size:13px;color:#333333;">przelew</div>
<div class="a" style="left:150px;top:345px;width:1748px;height:1px;background:#ececec"></div>
<div class="a" style="left:154px;top:327px;width:12px;height:14px;border:1px solid #3b8fce;background:#fff"></div>
<div class="t" style="left:173px;top:328px;font-size:13px;color:#333333;transform:scaleX(0.987);transform-origin:0 0;">2017-06-17</div>
<div class="t" style="left:255px;top:328px;font-size:13px;color:#333333;transform:scaleX(0.880);transform-origin:0 0;">FAS</div>
<div class="t" style="left:214px;width:100px;text-align:right;top:328px;font-size:13px;color:#333333;transform:scaleX(0.985);transform-origin:100% 0;">4</div>
<div class="t" style="left:320px;top:328px;font-size:13px;color:#333333;transform:scaleX(0.880);transform-origin:0 0;">PRZEDSIĘBIORS</div>
<div class="t" style="left:468px;top:328px;font-size:13px;color:#333333;transform:scaleX(0.971);transform-origin:0 0;">Zielona Góra</div>
<div class="t" style="left:598px;top:328px;font-size:13px;color:#333333;transform:scaleX(0.880);transform-origin:0 0;">PRZEDSIĘBIORSTWO</div>
<div class="t" style="left:906px;width:100px;text-align:right;top:328px;font-size:13px;color:#333333;transform:scaleX(0.987);transform-origin:100% 0;">11,99</div>
<div class="t" style="left:1011px;top:328px;font-size:13px;color:#333333;transform:scaleX(0.942);transform-origin:0 0;">Nie</div>
<div class="a" style="left:1085px;top:326px"><svg width="18" height="17" viewBox="0 0 18 17"><g fill="none" stroke="#6f6f6f" stroke-width="1"><path d="M4.5 4.5V0.5h9.5v4"/><path d="M4 12.5H1.5v-8h15v8H14"/><rect x="4.5" y="9.5" width="9.5" height="6" fill="#fff"/><path d="M6.5 11.5h5.5M6.5 13.5h5.5" stroke="#888"/><circle cx="14.4" cy="6.6" r="0.6" fill="#6f6f6f"/></g></svg></div>
<div class="t" style="left:1180px;top:328px;font-size:13px;color:#333333;transform:scaleX(0.987);transform-origin:0 0;">2017-07-31</div>
<div class="t" style="left:1271px;top:328px;font-size:13px;color:#333333;">przelew</div>
<div class="t" style="left:1348px;top:328px;font-size:13px;color:#333333;transform:scaleX(0.948);transform-origin:0 0;">Faktura VAT FAS/2014/4</div>
<div class="a" style="left:150px;top:367px;width:1748px;height:1px;background:#ececec"></div>
<div class="a" style="left:154px;top:349px;width:12px;height:14px;border:1px solid #3b8fce;background:#fff"></div>
<div class="t" style="left:173px;top:350px;font-size:13px;color:#333333;transform:scaleX(0.987);transform-origin:0 0;">2017-06-26</div>
<div class="t" style="left:255px;top:350px;font-size:13px;color:#333333;transform:scaleX(0.880);transform-origin:0 0;">FAS</div>
<div class="t" style="left:214px;width:100px;text-align:right;top:350px;font-size:13px;color:#333333;transform:scaleX(0.985);transform-origin:100% 0;">5</div>
<div class="t" style="left:320px;top:350px;font-size:13px;color:#333333;transform:scaleX(0.880);transform-origin:0 0;">FIRMA</div>
<div class="t" style="left:468px;top:350px;font-size:13px;color:#333333;transform:scaleX(0.971);transform-origin:0 0;">Zielona Góra</div>
<div class="t" style="left:598px;top:350px;font-size:13px;color:#333333;transform:scaleX(0.880);transform-origin:0 0;">FIRMA</div>
<div class="t" style="left:906px;width:100px;text-align:right;top:350px;font-size:13px;color:#333333;transform:scaleX(0.987);transform-origin:100% 0;">6,15</div>
<div class="t" style="left:1011px;top:350px;font-size:13px;color:#333333;transform:scaleX(0.942);transform-origin:0 0;">Nie</div>
<div class="a" style="left:1085px;top:348px"><svg width="18" height="17" viewBox="0 0 18 17"><g fill="none" stroke="#6f6f6f" stroke-width="1"><path d="M4.5 4.5V0.5h9.5v4"/><path d="M4 12.5H1.5v-8h15v8H14"/><rect x="4.5" y="9.5" width="9.5" height="6" fill="#fff"/><path d="M6.5 11.5h5.5M6.5 13.5h5.5" stroke="#888"/><circle cx="14.4" cy="6.6" r="0.6" fill="#6f6f6f"/></g></svg></div>
<div class="t" style="left:1180px;top:350px;font-size:13px;color:#333333;transform:scaleX(0.987);transform-origin:0 0;">2017-07-10</div>
<div class="t" style="left:1348px;top:350px;font-size:13px;color:#333333;transform:scaleX(0.948);transform-origin:0 0;">Faktura VAT FAS/2017/5</div>
<div class="a" style="left:150px;top:389px;width:1748px;height:1px;background:#ececec"></div>
<div class="a" style="left:154px;top:371px;width:12px;height:14px;border:1px solid #3b8fce;background:#fff"></div>
<div class="t" style="left:173px;top:372px;font-size:13px;color:#333333;transform:scaleX(0.987);transform-origin:0 0;">2017-06-26</div>
<div class="t" style="left:255px;top:372px;font-size:13px;color:#333333;transform:scaleX(0.880);transform-origin:0 0;">WZ</div>
<div class="t" style="left:214px;width:100px;text-align:right;top:372px;font-size:13px;color:#333333;transform:scaleX(0.985);transform-origin:100% 0;">1</div>
<div class="t" style="left:320px;top:372px;font-size:13px;color:#333333;transform:scaleX(0.880);transform-origin:0 0;">FIRMA</div>
<div class="t" style="left:468px;top:372px;font-size:13px;color:#333333;transform:scaleX(0.971);transform-origin:0 0;">Zielona Góra</div>
<div class="t" style="left:598px;top:372px;font-size:13px;color:#333333;transform:scaleX(0.880);transform-origin:0 0;">FIRMA</div>
<div class="t" style="left:906px;width:100px;text-align:right;top:372px;font-size:13px;color:#333333;transform:scaleX(0.987);transform-origin:100% 0;">6,15</div>
<div class="a" style="left:1085px;top:370px"><svg width="18" height="17" viewBox="0 0 18 17"><g fill="none" stroke="#6f6f6f" stroke-width="1"><path d="M4.5 4.5V0.5h9.5v4"/><path d="M4 12.5H1.5v-8h15v8H14"/><rect x="4.5" y="9.5" width="9.5" height="6" fill="#fff"/><path d="M6.5 11.5h5.5M6.5 13.5h5.5" stroke="#888"/><circle cx="14.4" cy="6.6" r="0.6" fill="#6f6f6f"/></g></svg></div>
<div class="t" style="left:1180px;top:372px;font-size:13px;color:#333333;transform:scaleX(0.987);transform-origin:0 0;">2017-07-10</div>
<div class="t" style="left:1348px;top:372px;font-size:13px;color:#333333;transform:scaleX(0.976);transform-origin:0 0;">Wydanie na zewnątrz WZ2017/1</div>
<div class="a" style="left:150px;top:411px;width:1748px;height:1px;background:#ececec"></div>
<div class="a" style="left:154px;top:393px;width:12px;height:14px;border:1px solid #3b8fce;background:#fff"></div>
<div class="t" style="left:173px;top:394px;font-size:13px;color:#333333;transform:scaleX(0.987);transform-origin:0 0;">2017-07-20</div>
<div class="t" style="left:255px;top:394px;font-size:13px;color:#333333;transform:scaleX(0.880);transform-origin:0 0;">FAS</div>
<div class="t" style="left:214px;width:100px;text-align:right;top:394px;font-size:13px;color:#333333;transform:scaleX(0.985);transform-origin:100% 0;">6</div>
<div class="t" style="left:320px;top:394px;font-size:13px;color:#333333;transform:scaleX(0.880);transform-origin:0 0;">FIRMA</div>
<div class="t" style="left:468px;top:394px;font-size:13px;color:#333333;transform:scaleX(0.971);transform-origin:0 0;">Zielona Góra</div>
<div class="t" style="left:598px;top:394px;font-size:13px;color:#333333;transform:scaleX(0.880);transform-origin:0 0;">FIRMA</div>
<div class="a" style="left:150px;top:433px;width:1748px;height:1px;background:#ececec"></div>
<div class="a" style="left:154px;top:415px;width:12px;height:14px;border:1px solid #3b8fce;background:#fff"></div>
<div class="t" style="left:173px;top:416px;font-size:13px;color:#333333;transform:scaleX(0.987);transform-origin:0 0;">2017-07-20</div>
<div class="t" style="left:255px;top:416px;font-size:13px;color:#333333;transform:scaleX(0.880);transform-origin:0 0;">FDW</div>
<div class="t" style="left:214px;width:100px;text-align:right;top:416px;font-size:13px;color:#333333;transform:scaleX(0.985);transform-origin:100% 0;">3</div>
<div class="t" style="left:320px;top:416px;font-size:13px;color:#333333;transform:scaleX(0.880);transform-origin:0 0;">FIRMA</div>
<div class="t" style="left:468px;top:416px;font-size:13px;color:#333333;transform:scaleX(0.971);transform-origin:0 0;">Zielona Góra</div>
<div class="t" style="left:598px;top:416px;font-size:13px;color:#333333;transform:scaleX(0.880);transform-origin:0 0;">FIRMA</div>
<div class="a" style="left:150px;top:455px;width:1748px;height:1px;background:#ececec"></div>
<div class="a" style="left:154px;top:437px;width:12px;height:14px;border:1px solid #3b8fce;background:#fff"></div>
<div class="t" style="left:173px;top:438px;font-size:13px;color:#333333;transform:scaleX(0.987);transform-origin:0 0;">2017-08-15</div>
<div class="t" style="left:255px;top:438px;font-size:13px;color:#333333;transform:scaleX(0.880);transform-origin:0 0;">FAS</div>
<div class="t" style="left:214px;width:100px;text-align:right;top:438px;font-size:13px;color:#333333;transform:scaleX(0.985);transform-origin:100% 0;">7</div>
<div class="t" style="left:320px;top:438px;font-size:13px;color:#333333;transform:scaleX(0.880);transform-origin:0 0;">FIRMA</div>
<div class="t" style="left:468px;top:438px;font-size:13px;color:#333333;transform:scaleX(0.971);transform-origin:0 0;">Zielona Góra</div>
<div class="t" style="left:598px;top:438px;font-size:13px;color:#333333;transform:scaleX(0.880);transform-origin:0 0;">FIRMA</div>
<div class="a" style="left:170px;top:456px;width:1727px;height:21px;background:#70b0dd"></div>
<div class="a" style="left:1898px;top:456px;width:4px;height:21px;background:#70b0dd"></div>
<div class="a" style="left:150px;top:477px;width:1748px;height:1px;background:#ececec"></div>
<div class="a" style="left:154px;top:459px;width:12px;height:14px;border:1px solid #3b8fce;background:#fff"></div>
<div class="t" style="left:173px;top:460px;font-size:13px;color:#fff;transform:scaleX(0.987);transform-origin:0 0;">2017-09-12</div>
<div class="t" style="left:255px;top:460px;font-size:13px;color:#fff;transform:scaleX(0.880);transform-origin:0 0;">FAS</div>
<div class="t" style="left:214px;width:100px;text-align:right;top:460px;font-size:13px;color:#fff;transform:scaleX(0.985);transform-origin:100% 0;">8</div>
<div class="t" style="left:320px;top:460px;font-size:13px;color:#fff;transform:scaleX(0.880);transform-origin:0 0;">FIRMA</div>
<div class="t" style="left:468px;top:460px;font-size:13px;color:#fff;transform:scaleX(0.971);transform-origin:0 0;">Zielona Góra</div>
<div class="t" style="left:598px;top:460px;font-size:13px;color:#fff;transform:scaleX(0.880);transform-origin:0 0;">FIRMA</div>
<div class="a" style="left:150px;top:499px;width:1748px;height:1px;background:#ececec"></div>
<div class="a" style="left:154px;top:481px;width:12px;height:14px;border:1px solid #3b8fce;background:#fff"></div>
<div class="t" style="left:173px;top:482px;font-size:13px;color:#333333;transform:scaleX(0.987);transform-origin:0 0;">2017-10-08</div>
<div class="t" style="left:255px;top:482px;font-size:13px;color:#333333;transform:scaleX(0.880);transform-origin:0 0;">FAS</div>
<div class="t" style="left:214px;width:100px;text-align:right;top:482px;font-size:13px;color:#333333;transform:scaleX(0.985);transform-origin:100% 0;">9</div>
<div class="t" style="left:320px;top:482px;font-size:13px;color:#333333;transform:scaleX(0.880);transform-origin:0 0;">FIRMA</div>
<div class="t" style="left:468px;top:482px;font-size:13px;color:#333333;transform:scaleX(0.971);transform-origin:0 0;">Zielona Góra</div>
<div class="t" style="left:598px;top:482px;font-size:13px;color:#333333;transform:scaleX(0.880);transform-origin:0 0;">FIRMA</div>
<div class="a" style="left:150px;top:521px;width:1748px;height:1px;background:#ececec"></div>
<div class="a" style="left:154px;top:503px;width:12px;height:14px;border:1px solid #3b8fce;background:#fff"></div>
<div class="t" style="left:173px;top:504px;font-size:13px;color:#333333;transform:scaleX(0.987);transform-origin:0 0;">2017-11-20</div>
<div class="t" style="left:255px;top:504px;font-size:13px;color:#333333;transform:scaleX(0.880);transform-origin:0 0;">FAS</div>
<div class="t" style="left:214px;width:100px;text-align:right;top:504px;font-size:13px;color:#333333;transform:scaleX(0.985);transform-origin:100% 0;">10</div>
<div class="t" style="left:320px;top:504px;font-size:13px;color:#333333;transform:scaleX(0.880);transform-origin:0 0;">FIRMA</div>
<div class="t" style="left:468px;top:504px;font-size:13px;color:#333333;transform:scaleX(0.971);transform-origin:0 0;">Zielona Góra</div>
<div class="t" style="left:598px;top:504px;font-size:13px;color:#333333;transform:scaleX(0.880);transform-origin:0 0;">FIRMA</div>
<div class="a" style="left:150px;top:543px;width:1748px;height:1px;background:#ececec"></div>
<div class="a" style="left:154px;top:525px;width:12px;height:14px;border:1px solid #3b8fce;background:#fff"></div>
<div class="t" style="left:173px;top:526px;font-size:13px;color:#333333;transform:scaleX(0.987);transform-origin:0 0;">2017-11-20</div>
<div class="t" style="left:255px;top:526px;font-size:13px;color:#333333;transform:scaleX(0.880);transform-origin:0 0;">FAS</div>
<div class="t" style="left:214px;width:100px;text-align:right;top:526px;font-size:13px;color:#333333;transform:scaleX(0.985);transform-origin:100% 0;">11</div>
<div class="t" style="left:320px;top:526px;font-size:13px;color:#333333;transform:scaleX(0.880);transform-origin:0 0;">FIRMA</div>
<div class="t" style="left:468px;top:526px;font-size:13px;color:#333333;transform:scaleX(0.971);transform-origin:0 0;">Zielona Góra</div>
<div class="t" style="left:598px;top:526px;font-size:13px;color:#333333;transform:scaleX(0.880);transform-origin:0 0;">FIRMA</div>
<div class="a" style="left:150px;top:565px;width:1748px;height:1px;background:#ececec"></div>
<div class="a" style="left:154px;top:547px;width:12px;height:14px;border:1px solid #3b8fce;background:#fff"></div>
<div class="t" style="left:173px;top:548px;font-size:13px;color:#333333;transform:scaleX(0.987);transform-origin:0 0;">2017-11-20</div>
<div class="t" style="left:255px;top:548px;font-size:13px;color:#333333;transform:scaleX(0.880);transform-origin:0 0;">FDW</div>
<div class="t" style="left:214px;width:100px;text-align:right;top:548px;font-size:13px;color:#333333;transform:scaleX(0.985);transform-origin:100% 0;">4</div>
<div class="t" style="left:320px;top:548px;font-size:13px;color:#333333;transform:scaleX(0.880);transform-origin:0 0;">FIRMA</div>
<div class="t" style="left:468px;top:548px;font-size:13px;color:#333333;transform:scaleX(0.971);transform-origin:0 0;">Zielona Góra</div>
<div class="t" style="left:598px;top:548px;font-size:13px;color:#333333;transform:scaleX(0.880);transform-origin:0 0;">FIRMA</div>
<div class="a" style="left:169px;top:126px;width:1px;height:439px;background:#f0f0f0"></div>
<div class="a" style="left:251px;top:126px;width:1px;height:439px;background:#f0f0f0"></div>
<div class="a" style="left:316px;top:126px;width:1px;height:439px;background:#f0f0f0"></div>
<div class="a" style="left:464px;top:126px;width:1px;height:439px;background:#f0f0f0"></div>
<div class="a" style="left:595px;top:126px;width:1px;height:439px;background:#f0f0f0"></div>
<div class="a" style="left:887px;top:126px;width:1px;height:439px;background:#f0f0f0"></div>
<div class="a" style="left:1007px;top:126px;width:1px;height:439px;background:#f0f0f0"></div>
<div class="a" style="left:1062px;top:126px;width:1px;height:439px;background:#f0f0f0"></div>
<div class="a" style="left:1125px;top:126px;width:1px;height:439px;background:#f0f0f0"></div>
<div class="a" style="left:1176px;top:126px;width:1px;height:439px;background:#f0f0f0"></div>
<div class="a" style="left:1267px;top:126px;width:1px;height:439px;background:#f0f0f0"></div>
<div class="a" style="left:1344px;top:126px;width:1px;height:439px;background:#f0f0f0"></div>
<div class="a" style="left:1897px;top:126px;width:1px;height:439px;background:#f0f0f0"></div>
<div class="a" style="left:1904px;top:107px;width:16px;height:917px;background:#f0f0f0"></div>
<div class="a" style="left:1904px;top:462px;width:16px;height:453px;background:#cdcdcd"></div>
<svg class="a" style="left:1907px;top:111px" width="10" height="8" viewBox="0 0 10 8"><path d="M1.5 6L5 2.5L8.5 6" fill="none" stroke="#505050" stroke-width="1.8"/></svg>
<svg class="a" style="left:1906px;top:1010px" width="10" height="8" viewBox="0 0 10 8"><path d="M1.5 2L5 5.5L8.5 2" fill="none" stroke="#505050" stroke-width="1.8"/></svg>
<div class="a" style="left:150px;top:1024px;width:1770px;height:16px;background:#f0f0f0"></div>
<div class="a" style="left:167px;top:1024px;width:17px;height:16px;background:#cdcdcd"></div>
<svg class="a" style="left:154px;top:1027px" width="8" height="10" viewBox="0 0 8 10"><path d="M6 1.5L2.5 5L6 8.5" fill="none" stroke="#505050" stroke-width="1.8"/></svg>
<svg class="a" style="left:1890px;top:1027px" width="8" height="10" viewBox="0 0 8 10"><path d="M2 1.5L5.5 5L2 8.5" fill="none" stroke="#505050" stroke-width="1.8"/></svg>
<div class="a" style="left:267px;top:374px;width:983px;height:585px;background:#fff;background-clip:padding-box;border:1px solid #a9a9a9;border-top-color:rgba(120,120,120,0.55);box-shadow:0 0 12px 3px rgba(0,0,0,0.2)"></div>
<svg class="a" style="left:276px;top:381px" width="16" height="16" viewBox="0 0 16 16"><rect width="16" height="16" fill="#a565ae"/><path d="M6 2.5h6v10.5h-8v-8.5z" fill="#fff"/><path d="M4 4.5l2-2M4.5 5.3c1 .3 1.8-.5 1.5-1.5" fill="none" stroke="#b27ab9" stroke-width="0.7"/><path d="M5.5 7.5h4.5M5.5 9h4.5M5.5 10.5h2" stroke="#b98ac0" stroke-width="0.9"/></svg>
<div class="t" style="left:297px;top:384px;font-size:12px;color:#9a9a9a;">Analiza obrotów na wyróżniku</div>
<div class="a" style="left:1130px;top:389px;width:10px;height:1px;background:#777"></div>
<div class="a" style="left:1175px;top:384px;width:10px;height:10px;border:1px solid #777"></div>
<svg class="a" style="left:1220px;top:383px" width="12" height="12" viewBox="0 0 12 12"><path d="M1 1L11 11M11 1L1 11" stroke="#777" stroke-width="1"/></svg>
<svg class="a" style="left:270px;top:405px" width="180" height="32" viewBox="270 405 180 32"><g fill="none" stroke="#444" stroke-width="1">
<path d="M274.5 434v-7M277.5 434v-9M280.5 434v-10M283.5 434v-9M286.5 434v-12M289.5 434v-13M292.5 434v-15M295.5 434v-22"/>
<path d="M274 425l7-7l3 2l6-5l3 2l5-6.5M293.5 410.5h4.5v4.5" stroke-width="1.1"/>
<polygon points="441.00,421.00 440.80,423.05 437.89,424.06 437.15,425.44 437.92,428.42 436.33,429.73 433.56,428.39 432.06,428.85 430.50,431.50 428.45,431.30 427.44,428.39 426.06,427.65 423.08,428.42 421.77,426.83 423.11,424.06 422.65,422.56 420.00,421.00 420.20,418.95 423.11,417.94 423.85,416.56 423.08,413.58 424.67,412.27 427.44,413.61 428.94,413.15 430.50,410.50 432.55,410.70 433.56,413.61 434.94,414.35 437.92,413.58 439.23,415.17 437.89,417.94 438.35,419.44" transform="rotate(-10 430.5 421)"/>
<circle cx="430.5" cy="421" r="3.5"/><rect x="432.5" y="424.5" width="11" height="9" fill="#fff"/><path d="M432.5 427h11M436 431l3-3" stroke-width="0.9"/>
</g></svg>
<div class="t" style="left:303px;top:417px;font-size:12px;color:#333;transform:scaleX(0.988);transform-origin:0 0;">Warunki zestawienia</div>
<div class="t" style="left:448px;top:417px;font-size:12px;color:#333;transform:scaleX(0.990);transform-origin:0 0;">Ustawienia wykresu</div>
<div class="a" style="left:268px;top:439px;width:981px;height:1px;background:#8c8c8c"></div>
<div class="t" style="left:559px;top:462px;font-size:11px;color:#333;transform:scaleX(0.989);transform-origin:0 0;">Zestawienie od...2017-01-01&nbsp; do... 2017-12-31, dla: Słodycze</div>
<svg class="a" style="left:0;top:0" width="1200" height="960" viewBox="0 0 1200 960"><line x1="318" y1="914.8" x2="1115" y2="914.8" stroke="#dadada" stroke-width="1.6"/><text x="315" y="918.3" font-size="11" text-anchor="end" fill="#333" font-family="Liberation Sans">0</text><line x1="318" y1="886.3" x2="1115" y2="886.3" stroke="#dadada" stroke-width="1.6"/><text x="315" y="889.8" font-size="11" text-anchor="end" fill="#333" font-family="Liberation Sans">2</text><line x1="318" y1="857.9" x2="1115" y2="857.9" stroke="#dadada" stroke-width="1.6"/><text x="315" y="861.4" font-size="11" text-anchor="end" fill="#333" font-family="Liberation Sans">4</text><line x1="318" y1="829.4" x2="1115" y2="829.4" stroke="#dadada" stroke-width="1.6"/><text x="315" y="832.9" font-size="11" text-anchor="end" fill="#333" font-family="Liberation Sans">6</text><line x1="318" y1="801.0" x2="1115" y2="801.0" stroke="#dadada" stroke-width="1.6"/><text x="315" y="804.5" font-size="11" text-anchor="end" fill="#333" font-family="Liberation Sans">8</text><line x1="318" y1="772.5" x2="1115" y2="772.5" stroke="#dadada" stroke-width="1.6"/><text x="315" y="776.0" font-size="11" text-anchor="end" fill="#333" font-family="Liberation Sans">10</text><line x1="318" y1="744.1" x2="1115" y2="744.1" stroke="#dadada" stroke-width="1.6"/><text x="315" y="747.6" font-size="11" text-anchor="end" fill="#333" font-family="Liberation Sans">12</text><line x1="318" y1="715.6" x2="1115" y2="715.6" stroke="#dadada" stroke-width="1.6"/><text x="315" y="719.1" font-size="11" text-anchor="end" fill="#333" font-family="Liberation Sans">14</text><line x1="318" y1="687.2" x2="1115" y2="687.2" stroke="#dadada" stroke-width="1.6"/><text x="315" y="690.7" font-size="11" text-anchor="end" fill="#333" font-family="Liberation Sans">16</text><line x1="318" y1="658.8" x2="1115" y2="658.8" stroke="#dadada" stroke-width="1.6"/><text x="315" y="662.2" font-size="11" text-anchor="end" fill="#333" font-family="Liberation Sans">18</text><line x1="318" y1="630.3" x2="1115" y2="630.3" stroke="#dadada" stroke-width="1.6"/><text x="315" y="633.8" font-size="11" text-anchor="end" fill="#333" font-family="Liberation Sans">20</text><line x1="318" y1="601.8" x2="1115" y2="601.8" stroke="#dadada" stroke-width="1.6"/><text x="315" y="605.3" font-size="11" text-anchor="end" fill="#333" font-family="Liberation Sans">22</text><line x1="318" y1="573.4" x2="1115" y2="573.4" stroke="#dadada" stroke-width="1.6"/><text x="315" y="576.9" font-size="11" text-anchor="end" fill="#333" font-family="Liberation Sans">24</text><line x1="318" y1="545.0" x2="1115" y2="545.0" stroke="#dadada" stroke-width="1.6"/><text x="315" y="548.5" font-size="11" text-anchor="end" fill="#333" font-family="Liberation Sans">26</text><line x1="318" y1="516.5" x2="1115" y2="516.5" stroke="#dadada" stroke-width="1.6"/><text x="315" y="520.0" font-size="11" text-anchor="end" fill="#333" font-family="Liberation Sans">28</text><line x1="318" y1="488.0" x2="1115" y2="488.0" stroke="#dadada" stroke-width="1.6"/><text x="315" y="491.5" font-size="11" text-anchor="end" fill="#333" font-family="Liberation Sans">30</text><line x1="319" y1="909.1" x2="323" y2="909.1" stroke="#bdbdbd" stroke-width="1"/><line x1="319" y1="903.4" x2="323" y2="903.4" stroke="#bdbdbd" stroke-width="1"/><line x1="319" y1="897.7" x2="323" y2="897.7" stroke="#bdbdbd" stroke-width="1"/><line x1="319" y1="892.0" x2="323" y2="892.0" stroke="#bdbdbd" stroke-width="1"/><line x1="319" y1="880.7" x2="323" y2="880.7" stroke="#bdbdbd" stroke-width="1"/><line x1="319" y1="875.0" x2="323" y2="875.0" stroke="#bdbdbd" stroke-width="1"/><line x1="319" y1="869.3" x2="323" y2="869.3" stroke="#bdbdbd" stroke-width="1"/><line x1="319" y1="863.6" x2="323" y2="863.6" stroke="#bdbdbd" stroke-width="1"/><line x1="319" y1="852.2" x2="323" y2="852.2" stroke="#bdbdbd" stroke-width="1"/><line x1="319" y1="846.5" x2="323" y2="846.5" stroke="#bdbdbd" stroke-width="1"/><line x1="319" y1="840.8" x2="323" y2="840.8" stroke="#bdbdbd" stroke-width="1"/><line x1="319" y1="835.1" x2="323" y2="835.1" stroke="#bdbdbd" stroke-width="1"/><line x1="319" y1="823.8" x2="323" y2="823.8" stroke="#bdbdbd" stroke-width="1"/><line x1="319" y1="818.1" x2="323" y2="818.1" stroke="#bdbdbd" stroke-width="1"/><line x1="319" y1="812.4" x2="323" y2="812.4" stroke="#bdbdbd" stroke-width="1"/><line x1="319" y1="806.7" x2="323" y2="806.7" stroke="#bdbdbd" stroke-width="1"/><line x1="319" y1="795.3" x2="323" y2="795.3" stroke="#bdbdbd" stroke-width="1"/><line x1="319" y1="789.6" x2="323" y2="789.6" stroke="#bdbdbd" stroke-width="1"/><line x1="319" y1="783.9" x2="323" y2="783.9" stroke="#bdbdbd" stroke-width="1"/><line x1="319" y1="778.2" x2="323" y2="778.2" stroke="#bdbdbd" stroke-width="1"/><line x1="319" y1="766.9" x2="323" y2="766.9" stroke="#bdbdbd" stroke-width="1"/><line x1="319" y1="761.2" x2="323" y2="761.2" stroke="#bdbdbd" stroke-width="1"/><line x1="319" y1="755.5" x2="323" y2="755.5" stroke="#bdbdbd" stroke-width="1"/><line x1="319" y1="749.8" x2="323" y2="749.8" stroke="#bdbdbd" stroke-width="1"/><line x1="319" y1="738.4" x2="323" y2="738.4" stroke="#bdbdbd" stroke-width="1"/><line x1="319" y1="732.7" x2="323" y2="732.7" stroke="#bdbdbd" stroke-width="1"/><line x1="319" y1="727.0" x2="323" y2="727.0" stroke="#bdbdbd" stroke-width="1"/><line x1="319" y1="721.3" x2="323" y2="721.3" stroke="#bdbdbd" stroke-width="1"/><line x1="319" y1="710.0" x2="323" y2="710.0" stroke="#bdbdbd" stroke-width="1"/><line x1="319" y1="704.3" x2="323" y2="704.3" stroke="#bdbdbd" stroke-width="1"/><line x1="319" y1="698.6" x2="323" y2="698.6" stroke="#bdbdbd" stroke-width="1"/><line x1="319" y1="692.9" x2="323" y2="692.9" stroke="#bdbdbd" stroke-width="1"/><line x1="319" y1="681.5" x2="323" y2="681.5" stroke="#bdbdbd" stroke-width="1"/><line x1="319" y1="675.8" x2="323" y2="675.8" stroke="#bdbdbd" stroke-width="1"/><line x1="319" y1="670.1" x2="323" y2="670.1" stroke="#bdbdbd" stroke-width="1"/><line x1="319" y1="664.4" x2="323" y2="664.4" stroke="#bdbdbd" stroke-width="1"/><line x1="319" y1="653.1" x2="323" y2="653.1" stroke="#bdbdbd" stroke-width="1"/><line x1="319" y1="647.4" x2="323" y2="647.4" stroke="#bdbdbd" stroke-width="1"/><line x1="319" y1="641.7" x2="323" y2="641.7" stroke="#bdbdbd" stroke-width="1"/><line x1="319" y1="636.0" x2="323" y2="636.0" stroke="#bdbdbd" stroke-width="1"/><line x1="319" y1="624.6" x2="323" y2="624.6" stroke="#bdbdbd" stroke-width="1"/><line x1="319" y1="618.9" x2="323" y2="618.9" stroke="#bdbdbd" stroke-width="1"/><line x1="319" y1="613.2" x2="323" y2="613.2" stroke="#bdbdbd" stroke-width="1"/><line x1="319" y1="607.5" x2="323" y2="607.5" stroke="#bdbdbd" stroke-width="1"/><line x1="319" y1="596.2" x2="323" y2="596.2" stroke="#bdbdbd" stroke-width="1"/><line x1="319" y1="590.5" x2="323" y2="590.5" stroke="#bdbdbd" stroke-width="1"/><line x1="319" y1="584.8" x2="323" y2="584.8" stroke="#bdbdbd" stroke-width="1"/><line x1="319" y1="579.1" x2="323" y2="579.1" stroke="#bdbdbd" stroke-width="1"/><line x1="319" y1="567.7" x2="323" y2="567.7" stroke="#bdbdbd" stroke-width="1"/><line x1="319" y1="562.0" x2="323" y2="562.0" stroke="#bdbdbd" stroke-width="1"/><line x1="319" y1="556.3" x2="323" y2="556.3" stroke="#bdbdbd" stroke-width="1"/><line x1="319" y1="550.6" x2="323" y2="550.6" stroke="#bdbdbd" stroke-width="1"/><line x1="319" y1="539.3" x2="323" y2="539.3" stroke="#bdbdbd" stroke-width="1"/><line x1="319" y1="533.6" x2="323" y2="533.6" stroke="#bdbdbd" stroke-width="1"/><line x1="319" y1="527.9" x2="323" y2="527.9" stroke="#bdbdbd" stroke-width="1"/><line x1="319" y1="522.2" x2="323" y2="522.2" stroke="#bdbdbd" stroke-width="1"/><line x1="319" y1="510.8" x2="323" y2="510.8" stroke="#bdbdbd" stroke-width="1"/><line x1="319" y1="505.1" x2="323" y2="505.1" stroke="#bdbdbd" stroke-width="1"/><line x1="319" y1="499.4" x2="323" y2="499.4" stroke="#bdbdbd" stroke-width="1"/><line x1="319" y1="493.7" x2="323" y2="493.7" stroke="#bdbdbd" stroke-width="1"/><line x1="368.0" y1="481" x2="368.0" y2="914.8" stroke="#dadada" stroke-width="1.6"/><line x1="431.8" y1="481" x2="431.8" y2="914.8" stroke="#dadada" stroke-width="1.6"/><line x1="495.6" y1="481" x2="495.6" y2="914.8" stroke="#dadada" stroke-width="1.6"/><line x1="559.5" y1="481" x2="559.5" y2="914.8" stroke="#dadada" stroke-width="1.6"/><line x1="623.3" y1="481" x2="623.3" y2="914.8" stroke="#dadada" stroke-width="1.6"/><line x1="687.1" y1="481" x2="687.1" y2="914.8" stroke="#dadada" stroke-width="1.6"/><line x1="750.9" y1="481" x2="750.9" y2="914.8" stroke="#dadada" stroke-width="1.6"/><line x1="814.7" y1="481" x2="814.7" y2="914.8" stroke="#dadada" stroke-width="1.6"/><line x1="878.6" y1="481" x2="878.6" y2="914.8" stroke="#dadada" stroke-width="1.6"/><line x1="942.4" y1="481" x2="942.4" y2="914.8" stroke="#dadada" stroke-width="1.6"/><line x1="1006.2" y1="481" x2="1006.2" y2="914.8" stroke="#dadada" stroke-width="1.6"/><line x1="1070.0" y1="481" x2="1070.0" y2="914.8" stroke="#dadada" stroke-width="1.6"/><line x1="323" y1="481" x2="1116" y2="481" stroke="#dadada" stroke-width="1.6"/><line x1="1115.2" y1="481" x2="1115.2" y2="915.8" stroke="#dadada" stroke-width="1.6"/><line x1="323.2" y1="480" x2="323.2" y2="916.8" stroke="#b8b8b8" stroke-width="2"/><line x1="322" y1="915.5999999999999" x2="1116" y2="915.5999999999999" stroke="#b8b8b8" stroke-width="2"/><line x1="336.1" y1="916.3" x2="336.1" y2="919.3" stroke="#a8a8a8" stroke-width="1"/><line x1="352.0" y1="916.3" x2="352.0" y2="919.3" stroke="#a8a8a8" stroke-width="1"/><line x1="368.0" y1="916.3" x2="368.0" y2="920.8" stroke="#a8a8a8" stroke-width="1.3"/><line x1="384.0" y1="916.3" x2="384.0" y2="919.3" stroke="#a8a8a8" stroke-width="1"/><line x1="399.9" y1="916.3" x2="399.9" y2="919.3" stroke="#a8a8a8" stroke-width="1"/><line x1="415.9" y1="916.3" x2="415.9" y2="919.3" stroke="#a8a8a8" stroke-width="1"/><line x1="431.8" y1="916.3" x2="431.8" y2="920.8" stroke="#a8a8a8" stroke-width="1.3"/><line x1="447.8" y1="916.3" x2="447.8" y2="919.3" stroke="#a8a8a8" stroke-width="1"/><line x1="463.7" y1="916.3" x2="463.7" y2="919.3" stroke="#a8a8a8" stroke-width="1"/><line x1="479.7" y1="916.3" x2="479.7" y2="919.3" stroke="#a8a8a8" stroke-width="1"/><line x1="495.6" y1="916.3" x2="495.6" y2="920.8" stroke="#a8a8a8" stroke-width="1.3"/><line x1="511.6" y1="916.3" x2="511.6" y2="919.3" stroke="#a8a8a8" stroke-width="1"/><line x1="527.5" y1="916.3" x2="527.5" y2="919.3" stroke="#a8a8a8" stroke-width="1"/><line x1="543.5" y1="916.3" x2="543.5" y2="919.3" stroke="#a8a8a8" stroke-width="1"/><line x1="559.5" y1="916.3" x2="559.5" y2="920.8" stroke="#a8a8a8" stroke-width="1.3"/><line x1="575.4" y1="916.3" x2="575.4" y2="919.3" stroke="#a8a8a8" stroke-width="1"/><line x1="591.4" y1="916.3" x2="591.4" y2="919.3" stroke="#a8a8a8" stroke-width="1"/><line x1="607.3" y1="916.3" x2="607.3" y2="919.3" stroke="#a8a8a8" stroke-width="1"/><line x1="623.3" y1="916.3" x2="623.3" y2="920.8" stroke="#a8a8a8" stroke-width="1.3"/><line x1="639.2" y1="916.3" x2="639.2" y2="919.3" stroke="#a8a8a8" stroke-width="1"/><line x1="655.2" y1="916.3" x2="655.2" y2="919.3" stroke="#a8a8a8" stroke-width="1"/><line x1="671.1" y1="916.3" x2="671.1" y2="919.3" stroke="#a8a8a8" stroke-width="1"/><line x1="687.1" y1="916.3" x2="687.1" y2="920.8" stroke="#a8a8a8" stroke-width="1.3"/><line x1="703.1" y1="916.3" x2="703.1" y2="919.3" stroke="#a8a8a8" stroke-width="1"/><line x1="719.0" y1="916.3" x2="719.0" y2="919.3" stroke="#a8a8a8" stroke-width="1"/><line x1="735.0" y1="916.3" x2="735.0" y2="919.3" stroke="#a8a8a8" stroke-width="1"/><line x1="750.9" y1="916.3" x2="750.9" y2="920.8" stroke="#a8a8a8" stroke-width="1.3"/><line x1="766.9" y1="916.3" x2="766.9" y2="919.3" stroke="#a8a8a8" stroke-width="1"/><line x1="782.8" y1="916.3" x2="782.8" y2="919.3" stroke="#a8a8a8" stroke-width="1"/><line x1="798.8" y1="916.3" x2="798.8" y2="919.3" stroke="#a8a8a8" stroke-width="1"/><line x1="814.7" y1="916.3" x2="814.7" y2="920.8" stroke="#a8a8a8" stroke-width="1.3"/><line x1="830.7" y1="916.3" x2="830.7" y2="919.3" stroke="#a8a8a8" stroke-width="1"/><line x1="846.6" y1="916.3" x2="846.6" y2="919.3" stroke="#a8a8a8" stroke-width="1"/><line x1="862.6" y1="916.3" x2="862.6" y2="919.3" stroke="#a8a8a8" stroke-width="1"/><line x1="878.6" y1="916.3" x2="878.6" y2="920.8" stroke="#a8a8a8" stroke-width="1.3"/><line x1="894.5" y1="916.3" x2="894.5" y2="919.3" stroke="#a8a8a8" stroke-width="1"/><line x1="910.5" y1="916.3" x2="910.5" y2="919.3" stroke="#a8a8a8" stroke-width="1"/><line x1="926.4" y1="916.3" x2="926.4" y2="919.3" stroke="#a8a8a8" stroke-width="1"/><line x1="942.4" y1="916.3" x2="942.4" y2="920.8" stroke="#a8a8a8" stroke-width="1.3"/><line x1="958.3" y1="916.3" x2="958.3" y2="919.3" stroke="#a8a8a8" stroke-width="1"/><line x1="974.3" y1="916.3" x2="974.3" y2="919.3" stroke="#a8a8a8" stroke-width="1"/><line x1="990.2" y1="916.3" x2="990.2" y2="919.3" stroke="#a8a8a8" stroke-width="1"/><line x1="1006.2" y1="916.3" x2="1006.2" y2="920.8" stroke="#a8a8a8" stroke-width="1.3"/><line x1="1022.2" y1="916.3" x2="1022.2" y2="919.3" stroke="#a8a8a8" stroke-width="1"/><line x1="1038.1" y1="916.3" x2="1038.1" y2="919.3" stroke="#a8a8a8" stroke-width="1"/><line x1="1054.1" y1="916.3" x2="1054.1" y2="919.3" stroke="#a8a8a8" stroke-width="1"/><line x1="1070.0" y1="916.3" x2="1070.0" y2="920.8" stroke="#a8a8a8" stroke-width="1.3"/><line x1="1086.0" y1="916.3" x2="1086.0" y2="919.3" stroke="#a8a8a8" stroke-width="1"/><line x1="1101.9" y1="916.3" x2="1101.9" y2="919.3" stroke="#a8a8a8" stroke-width="1"/><polygon points="368.0,914.8 368.0,914.8 431.8,914.8 495.6,879.9 559.5,914.8 623.3,830.2 687.1,914.8 750.9,914.8 814.7,914.8 878.6,914.8 942.4,914.8 1006.2,914.8 1070.0,914.8 1070.0,914.8" fill="#4565a4" stroke="#5b5fc0" stroke-width="1"/><line x1="368.0" y1="914.5" x2="1070.0" y2="914.5" stroke="#5b5fc0" stroke-width="2"/><line x1="495.6" y1="879.9" x2="495.6" y2="914.8" stroke="#151a2a" stroke-width="1.6"/><line x1="431.8" y1="914.5" x2="559.5" y2="914.5" stroke="#1e2440" stroke-width="1.6"/><line x1="559.5" y1="914.5" x2="687.1" y2="914.5" stroke="#1e2440" stroke-width="1.6"/><line x1="345.4" y1="914.5" x2="390.6" y2="914.5" stroke="#e8c27a" stroke-width="2"/><rect x="409.2" y="857.9" width="45.2" height="56.9" fill="#ecb23a" stroke="#f79241" stroke-width="1.3"/><line x1="473.0" y1="914.5" x2="518.2" y2="914.5" stroke="#a88a4a" stroke-width="2"/><rect x="536.9" y="875.8" width="45.2" height="39.0" fill="#ecb23a" stroke="#f79241" stroke-width="1.3"/><rect x="600.7" y="807.4" width="45.2" height="107.4" fill="#ecb23a" stroke="#f79241" stroke-width="1.3"/><rect x="664.5" y="875.8" width="45.2" height="39.0" fill="#ecb23a" stroke="#f79241" stroke-width="1.3"/><rect x="728.3" y="484.1" width="45.2" height="430.7" fill="#ecb23a" stroke="#f79241" stroke-width="1.3"/><rect x="792.1" y="896.2" width="45.2" height="18.6" fill="#ecb23a" stroke="#f79241" stroke-width="1.3"/><rect x="856.0" y="819.2" width="45.2" height="95.6" fill="#ecb23a" stroke="#f79241" stroke-width="1.3"/><rect x="919.8" y="606.7" width="45.2" height="308.1" fill="#ecb23a" stroke="#f79241" stroke-width="1.3"/><rect x="983.6" y="645.0" width="45.2" height="269.8" fill="#ecb23a" stroke="#f79241" stroke-width="1.3"/><line x1="1047.4" y1="914.5" x2="1092.6" y2="914.5" stroke="#e8c27a" stroke-width="2"/><text x="368.0" y="932.8" font-size="11" text-anchor="middle" fill="#333" font-family="Liberation Sans">2017-1</text><text x="431.8" y="932.8" font-size="11" text-anchor="middle" fill="#333" font-family="Liberation Sans">2017-2</text><text x="495.6" y="932.8" font-size="11" text-anchor="middle" fill="#333" font-family="Liberation Sans">2017-3</text><text x="559.5" y="932.8" font-size="11" text-anchor="middle" fill="#333" font-family="Liberation Sans">2017-4</text><text x="623.3" y="932.8" font-size="11" text-anchor="middle" fill="#333" font-family="Liberation Sans">2017-5</text><text x="687.1" y="932.8" font-size="11" text-anchor="middle" fill="#333" font-family="Liberation Sans">2017-6</text><text x="750.9" y="932.8" font-size="11" text-anchor="middle" fill="#333" font-family="Liberation Sans">2017-7</text><text x="814.7" y="932.8" font-size="11" text-anchor="middle" fill="#333" font-family="Liberation Sans">2017-8</text><text x="878.6" y="932.8" font-size="11" text-anchor="middle" fill="#333" font-family="Liberation Sans">2017-9</text><text x="942.4" y="932.8" font-size="11" text-anchor="middle" fill="#333" font-family="Liberation Sans">2017-10</text><text x="1006.2" y="932.8" font-size="11" text-anchor="middle" fill="#333" font-family="Liberation Sans">2017-11</text><text x="1070.0" y="932.8" font-size="11" text-anchor="middle" fill="#333" font-family="Liberation Sans">2017-12</text></svg>
<div class="a" style="left:1140px;top:507px;width:120px;height:40px;background:#fff;border:2px solid #5a5a5a;border-radius:2px;box-shadow:2px 2px 2px rgba(0,0,0,0.15)"></div>
<div class="a" style="left:1145px;top:513px;width:12px;height:12px;background:#4565a4;border:1.5px solid #111a33;border-radius:2px"></div>
<div class="a" style="left:1145px;top:529px;width:12px;height:12px;background:#ecb23a;border:1.5px solid #f79241;border-radius:2px"></div>
<div class="t" style="left:1163px;top:513px;font-size:11px;color:#333;transform:scaleX(0.974);transform-origin:0 0;">Zakup</div>
<div class="t" style="left:1163px;top:529px;font-size:11px;color:#333;transform:scaleX(0.981);transform-origin:0 0;">Sprzedaż</div>
<div class="a" style="left:1650px;top:405px;width:25px;height:62px;background:#f0f0f0;border:1px solid #d6d6d6;box-shadow:0 0 8px rgba(0,0,0,0.18)"></div>
<div class="a" style="left:1651px;top:408px;width:22px;height:19px;background:#cdcdcd"></div>
<div class="a" style="left:1198px;top:390px;width:466px;height:444px;background:#fff;border:1px solid #6a6a6a;box-shadow:0 0 14px 4px rgba(0,0,0,0.25)"></div>
<div class="t" style="left:1202px;top:397px;font-size:12px;color:#111;transform:scaleX(0.984);transform-origin:0 0;">Ustawienia -</div>
<div class="t" style="left:1276px;top:397px;font-size:12px;color:#111;transform:scaleX(0.966);transform-origin:0 0;">Wykres</div>
<div class="t" style="left:1325px;top:397px;font-size:12px;color:#111;">-</div>
<div class="t" style="left:1337px;top:397px;font-size:12px;color:#111;transform:scaleX(0.955);transform-origin:0 0;">Osie</div>
<div class="t" style="left:1371px;top:397px;font-size:12px;color:#111;">-</div>
<div class="t" style="left:1383px;top:397px;font-size:12px;color:#111;transform:scaleX(0.968);transform-origin:0 0;">Skala</div>
<svg class="a" style="left:1642px;top:397px" width="12" height="12" viewBox="0 0 12 12"><path d="M1 1L11 11M11 1L1 11" stroke="#111" stroke-width="1.1"/></svg>
<div class="a" style="left:1202px;top:416px;width:66px;height:25px;background:#3b8fce;border-top:3px solid #6fb0e0"></div>
<div class="t" style="left:1217px;top:422px;font-size:12.5px;color:#fff;transform:scaleX(0.966);transform-origin:0 0;">Wykres</div>
<div class="t" style="left:1283px;top:422px;font-size:12.5px;color:#333;transform:scaleX(0.966);transform-origin:0 0;">Serie</div>
<div class="a" style="left:1199px;top:440px;width:464px;height:2px;background:#5ea4db"></div>
<div class="a" style="left:1300px;top:460px;width:54px;height:25px;background:#3b8fce;border-top:3px solid #6fb0e0"></div>
<div class="t" style="left:1218px;top:467px;font-size:12px;color:#333;transform:scaleX(0.986);transform-origin:0 0;">Podstawowe</div>
<div class="t" style="left:1317px;top:467px;font-size:12px;color:#fff;transform:scaleX(0.955);transform-origin:0 0;">Osie</div>
<div class="t" style="left:1368px;top:467px;font-size:12px;color:#333;transform:scaleX(0.966);transform-origin:0 0;">Tytuł</div>
<div class="t" style="left:1422px;top:467px;font-size:12px;color:#333;transform:scaleX(0.983);transform-origin:0 0;">Legenda</div>
<div class="t" style="left:1492px;top:467px;font-size:12px;color:#333;transform:scaleX(0.969);transform-origin:0 0;">Panel</div>
<div class="t" style="left:1548px;top:467px;font-size:12px;color:#333;transform:scaleX(0.972);transform-origin:0 0;">Strony</div>
<div class="t" style="left:1608px;top:467px;font-size:12px;color:#333;transform:scaleX(0.973);transform-origin:0 0;">Ściany</div>
<div class="a" style="left:1199px;top:484px;width:464px;height:2px;background:#5ea4db"></div>
<div class="a" style="left:1326px;top:490px;width:56px;height:25px;background:#3b8fce;border-top:3px solid #6fb0e0"></div>
<div class="t" style="left:1341px;top:495px;font-size:12px;color:#fff;transform:scaleX(0.968);transform-origin:0 0;">Skala</div>
<div class="t" style="left:1396px;top:495px;font-size:12px;color:#333;transform:scaleX(0.966);transform-origin:0 0;">Tytuł</div>
<div class="t" style="left:1450px;top:495px;font-size:12px;color:#333;transform:scaleX(0.963);transform-origin:0 0;">Opisy</div>
<div class="t" style="left:1505px;top:495px;font-size:12px;color:#333;transform:scaleX(0.979);transform-origin:0 0;">Podziały - Siatka</div>
<div class="a" style="left:1324px;top:513px;width:339px;height:2px;background:#5ea4db"></div>
<svg class="a" style="left:1205px;top:496px" width="13" height="13" viewBox="0 0 13 13"><rect x="0.5" y="0.5" width="12" height="12" fill="#fff" stroke="#333"/><path d="M2 6L5 9.3L11 2.8" fill="none" stroke="#333" stroke-width="1.1"/></svg>
<div class="t" style="left:1221px;top:497px;font-size:12px;color:#333;transform:scaleX(0.986);transform-origin:0 0;"><u>O</u>sie widoczne</div>
<div class="t" style="left:1208px;top:519px;font-size:11.5px;color:#3b8fce;transform:scaleX(0.955);transform-origin:0 0;">Osie</div>
<svg class="a" style="left:1213.0px;top:543.0px" width="13" height="13" viewBox="0 0 13 13"><circle cx="6.5" cy="6.5" r="6" fill="#fff" stroke="#333"/><circle cx="6.5" cy="6.5" r="3.3" fill="#111"/></svg>
<div class="t" style="left:1228px;top:544px;font-size:12px;color:#111;transform:scaleX(0.972);transform-origin:0 0;">Lewa</div>
<svg class="a" style="left:1213.0px;top:579.0px" width="13" height="13" viewBox="0 0 13 13"><circle cx="6.5" cy="6.5" r="6" fill="#fff" stroke="#333"/></svg>
<div class="t" style="left:1228px;top:580px;font-size:12px;color:#111;transform:scaleX(0.972);transform-origin:0 0;">Prawa</div>
<svg class="a" style="left:1213.0px;top:615.5px" width="13" height="13" viewBox="0 0 13 13"><circle cx="6.5" cy="6.5" r="6" fill="#fff" stroke="#333"/></svg>
<div class="t" style="left:1228px;top:616px;font-size:12px;color:#111;transform:scaleX(0.966);transform-origin:0 0;">Górna</div>
<svg class="a" style="left:1213.0px;top:651.5px" width="13" height="13" viewBox="0 0 13 13"><circle cx="6.5" cy="6.5" r="6" fill="#fff" stroke="#333"/></svg>
<div class="t" style="left:1228px;top:652px;font-size:12px;color:#111;transform:scaleX(0.967);transform-origin:0 0;">Dolna</div>
<svg class="a" style="left:1205px;top:693px" width="13" height="13" viewBox="0 0 13 13"><rect x="0.5" y="0.5" width="12" height="12" fill="#fff" stroke="#333"/><path d="M2 6L5 9.3L11 2.8" fill="none" stroke="#333" stroke-width="1.1"/></svg>
<div class="t" style="left:1221px;top:694px;font-size:12px;color:#333;transform:scaleX(0.974);transform-origin:0 0;"><u>W</u>idoczna</div>
<div class="a" style="left:1206px;top:716px;width:91px;height:25px;background:#e1e1e1;border:1px solid #adadad"></div>
<div class="t" style="left:1212px;top:723px;font-size:12px;color:#333;transform:scaleX(0.985);transform-origin:0 0;">O<u>b</u>ramowanie</div>
<svg class="a" style="left:1332px;top:521px" width="13" height="13" viewBox="0 0 13 13"><rect x="0.5" y="0.5" width="12" height="12" fill="#fff" stroke="#333"/><path d="M2 6L5 9.3L11 2.8" fill="none" stroke="#333" stroke-width="1.1"/></svg>
<div class="t" style="left:1348px;top:522px;font-size:12px;color:#333;transform:scaleX(0.987);transform-origin:0 0;"><u>A</u>utomatyczna</div>
<div class="t" style="left:1332px;top:548px;font-size:12px;color:#333;transform:scaleX(0.975);transform-origin:0 0;">Minimum</div>
<div class="t" style="left:1388px;top:548px;font-size:12px;color:#333;">= 0</div>
<div class="t" style="left:1332px;top:575px;font-size:12px;color:#333;transform:scaleX(0.979);transform-origin:0 0;">Maksimum</div>
<div class="t" style="left:1388px;top:575px;font-size:12px;color:#333;transform:scaleX(0.990);transform-origin:0 0;">= 30,28</div>
<div class="t" style="left:1332px;top:602px;font-size:12px;color:#333;transform:scaleX(0.971);transform-origin:0 0;">Odstęp</div>
<div class="t" style="left:1389px;top:602px;font-size:12px;color:#333;">= 0</div>
<svg class="a" style="left:1446px;top:548px" width="13" height="13" viewBox="0 0 13 13"><rect x="0.5" y="0.5" width="12" height="12" fill="#fff" stroke="#9a9a9a"/><path d="M2 6L5 9.3L11 2.8" fill="none" stroke="#9a9a9a" stroke-width="1.1"/></svg>
<div class="t" style="left:1462px;top:548px;font-size:12px;color:#c2c2c2;transform:scaleX(0.988);transform-origin:0 0;">A<u>u</u>tomatycznie</div>
<div class="a" style="left:1546px;top:543px;width:75px;height:21px;background:#e3e3e3;border:1px solid #c9c9c9"></div>
<div class="t" style="left:1565px;top:548px;font-size:12px;color:#c0c0c0;transform:scaleX(0.974);transform-origin:0 0;">Z<u>m</u>ień</div>
<svg class="a" style="left:1446px;top:575px" width="13" height="13" viewBox="0 0 13 13"><rect x="0.5" y="0.5" width="12" height="12" fill="#fff" stroke="#9a9a9a"/><path d="M2 6L5 9.3L11 2.8" fill="none" stroke="#9a9a9a" stroke-width="1.1"/></svg>
<div class="t" style="left:1462px;top:575px;font-size:12px;color:#c2c2c2;transform:scaleX(0.988);transform-origin:0 0;">A<u>u</u>tomatycznie</div>
<div class="a" style="left:1546px;top:570px;width:75px;height:21px;background:#e3e3e3;border:1px solid #c9c9c9"></div>
<div class="t" style="left:1565px;top:575px;font-size:12px;color:#c0c0c0;transform:scaleX(0.974);transform-origin:0 0;">Z<u>m</u>ień</div>
<div class="a" style="left:1547px;top:597px;width:75px;height:21px;background:#e1e1e1;border:1px solid #adadad"></div>
<div class="t" style="left:1566px;top:602px;font-size:12px;color:#222;transform:scaleX(0.974);transform-origin:0 0;">Zmi<u>e</u>ń</div>
<svg class="a" style="left:1332px;top:632px" width="13" height="13" viewBox="0 0 13 13"><rect x="0.5" y="0.5" width="12" height="12" fill="#fff" stroke="#333"/></svg>
<div class="t" style="left:1348px;top:633px;font-size:12px;color:#333;transform:scaleX(0.990);transform-origin:0 0;">Loga<u>r</u>ytmiczna</div>
<svg class="a" style="left:1332px;top:655px" width="13" height="13" viewBox="0 0 13 13"><rect x="0.5" y="0.5" width="12" height="12" fill="#fff" stroke="#333"/></svg>
<div class="t" style="left:1348px;top:655px;font-size:12px;color:#333;transform:scaleX(0.982);transform-origin:0 0;">Odwró<u>c</u>ona</div>
<div class="a" style="left:1323px;top:745px;width:1px;height:1px;background:#777"></div>
<div class="a" style="left:1199px;top:796px;width:464px;height:2px;background:#e6e6e6"></div>
<div class="a" style="left:1199px;top:797px;width:2px;height:1px;background:#555"></div>
<div class="a" style="left:1505px;top:803px;width:75px;height:25px;background:#e1e1e1;border:2px solid #3b8fce"></div>
<svg class="a" style="left:1512px;top:811px" width="14" height="10" viewBox="0 0 14 10"><path d="M1 1.5L7 8L13 1.5" fill="none" stroke="#666" stroke-width="1"/></svg>
<div class="t" style="left:1531px;top:810px;font-size:13px;color:#111;transform:scaleX(0.979);transform-origin:0 0;"><u>Z</u>amknij</div>
<div class="a" style="left:1583px;top:803px;width:75px;height:25px;background:#e1e1e1;border:1px solid #adadad"></div>
<svg class="a" style="left:1594px;top:809px" width="10" height="14" viewBox="0 0 10 14"><path d="M2 4a3 3 0 1 1 4.5 2.5c-1 .7-1.5 1.2-1.5 2.5M5 11v1.5" fill="none" stroke="#888" stroke-width="1"/></svg>
<div class="t" style="left:1611px;top:810px;font-size:13px;color:#333;transform:scaleX(0.974);transform-origin:0 0;">Pomoc</div>
</body></html>
